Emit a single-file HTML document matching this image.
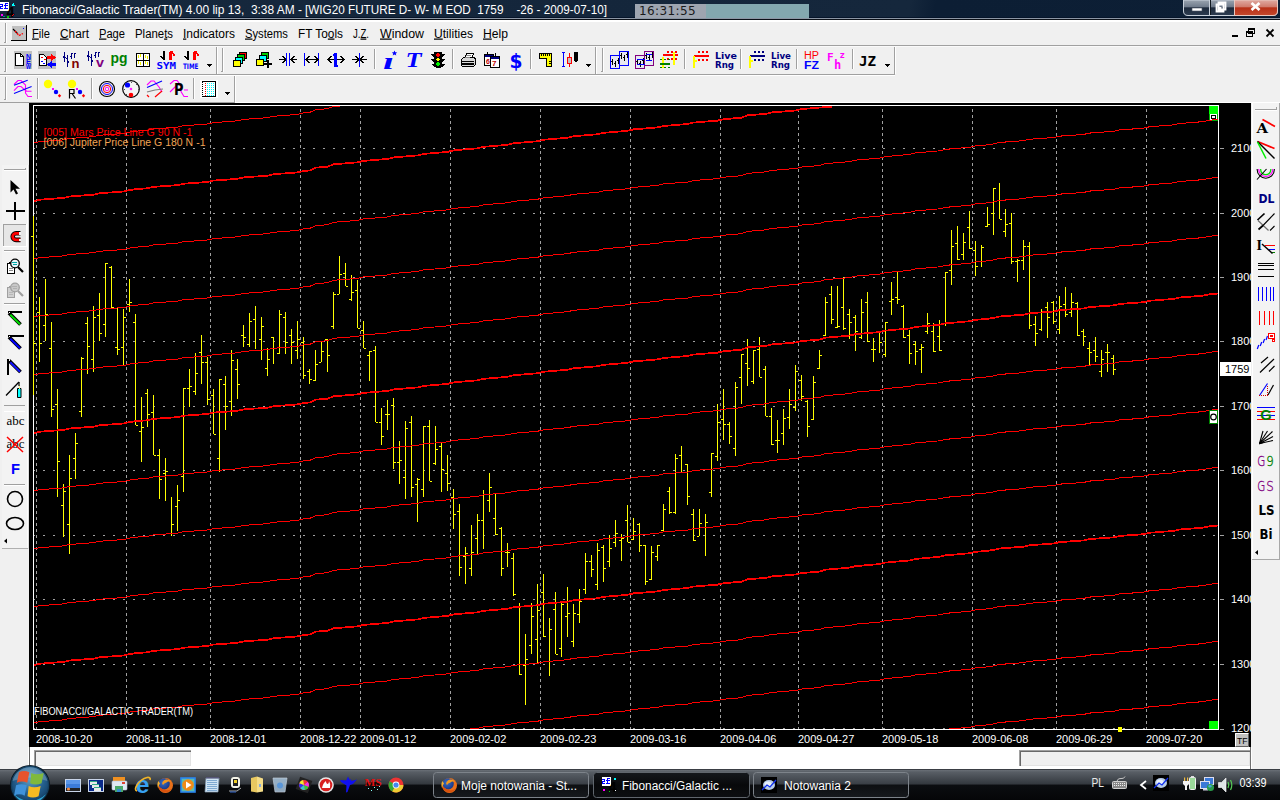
<!DOCTYPE html>
<html><head><meta charset="utf-8"><title>Fibonacci/Galactic Trader</title>
<style>
html,body{margin:0;padding:0}
body{width:1280px;height:800px;overflow:hidden;background:#f0f0f0;position:relative;font-family:"Liberation Sans",Arial,sans-serif;font-size:12px;color:#000}
.abs{position:absolute;display:block}
.t{position:absolute;white-space:nowrap;line-height:1}
</style></head><body>
<div class="abs" style="left:0;top:0;width:1280px;height:17px;background:linear-gradient(100deg,#16283d 0%,#14263b 45%,#15273c 71%,#0c1e34 73%,#0d1f35 100%)"></div>
<div class="abs" style="left:0;top:17px;width:1280px;height:1px;background:#06152a"></div>
<div class="abs" style="left:0;top:18px;width:1280px;height:1px;background:#8c96a4"></div>
<div class="abs" style="left:0;top:19px;width:1280px;height:1px;background:#0c1118"></div>
<div class="abs" style="left:0;top:20px;width:1280px;height:2px;background:#fff"></div>
<div class="abs" style="left:635px;top:4px;width:71px;height:14px;background:#9ea5b0"></div>
<div class="abs" style="left:706px;top:4px;width:103px;height:14px;background:#83a8af"></div>
<div class="t" style="left:639px;top:5px;font-size:12px;color:#1a1a1a;font-family:'DejaVu Sans',sans-serif;letter-spacing:.4px">16:31:55</div>
<div class="abs" style="left:0;top:45px;width:1280px;height:1px;background:#a0a0a0"></div>
<svg class="abs" style="left:0;top:0" width="1280" height="103" viewBox="0 0 1280 103" shape-rendering="crispEdges"><g shape-rendering="auto" xml:space="preserve"><text x="22" y="14" font-size="12.5" fill="#fff" font-weight="normal" font-family="Liberation Sans, sans-serif" textLength="280" lengthAdjust="spacingAndGlyphs">Fibonacci/Galactic Trader(TM) 4.00 lip 13,&#160; 3:38 AM -</text><text x="305" y="14" font-size="12.5" fill="#fff" font-weight="normal" font-family="Liberation Sans, sans-serif" textLength="302" lengthAdjust="spacingAndGlyphs">[WIG20 FUTURE D- W- M EOD&#160; 1759&#160;&#160;&#160; -26 - 2009-07-10]</text><text x="32" y="37.5" font-size="12.3" fill="#000" font-weight="normal" font-family="Liberation Sans, sans-serif" textLength="18" lengthAdjust="spacingAndGlyphs"><tspan text-decoration="underline">F</tspan>ile</text><text x="60" y="37.5" font-size="12.3" fill="#000" font-weight="normal" font-family="Liberation Sans, sans-serif" textLength="29" lengthAdjust="spacingAndGlyphs"><tspan text-decoration="underline">C</tspan>hart</text><text x="99" y="37.5" font-size="12.3" fill="#000" font-weight="normal" font-family="Liberation Sans, sans-serif" textLength="26" lengthAdjust="spacingAndGlyphs"><tspan text-decoration="underline">P</tspan>age</text><text x="135" y="37.5" font-size="12.3" fill="#000" font-weight="normal" font-family="Liberation Sans, sans-serif" textLength="38" lengthAdjust="spacingAndGlyphs">Plane<tspan text-decoration="underline">t</tspan>s</text><text x="183" y="37.5" font-size="12.3" fill="#000" font-weight="normal" font-family="Liberation Sans, sans-serif" textLength="52" lengthAdjust="spacingAndGlyphs"><tspan text-decoration="underline">I</tspan>ndicators</text><text x="245" y="37.5" font-size="12.3" fill="#000" font-weight="normal" font-family="Liberation Sans, sans-serif" textLength="43" lengthAdjust="spacingAndGlyphs"><tspan text-decoration="underline">S</tspan>ystems</text><text x="298" y="37.5" font-size="12.3" fill="#000" font-weight="normal" font-family="Liberation Sans, sans-serif" textLength="45" lengthAdjust="spacingAndGlyphs">FT To<tspan text-decoration="underline">o</tspan>ls</text><text x="353" y="37.5" font-size="12.3" fill="#000" font-weight="normal" font-family="Liberation Sans, sans-serif" textLength="16" lengthAdjust="spacingAndGlyphs">J.<tspan text-decoration="underline">Z</tspan>.</text><text x="380" y="37.5" font-size="12.3" fill="#000" font-weight="normal" font-family="Liberation Sans, sans-serif" textLength="44" lengthAdjust="spacingAndGlyphs"><tspan text-decoration="underline">W</tspan>indow</text><text x="434" y="37.5" font-size="12.3" fill="#000" font-weight="normal" font-family="Liberation Sans, sans-serif" textLength="39" lengthAdjust="spacingAndGlyphs"><tspan text-decoration="underline">U</tspan>tilities</text><text x="483" y="37.5" font-size="12.3" fill="#000" font-weight="normal" font-family="Liberation Sans, sans-serif" textLength="25" lengthAdjust="spacingAndGlyphs"><tspan text-decoration="underline">H</tspan>elp</text></g><rect x="0" y="2" width="9" height="9" fill="#fff"/><rect x="0" y="4" width="3" height="1" fill="#00f"/><rect x="2" y="5" width="1" height="1" fill="#00f"/><rect x="0" y="6" width="3" height="1" fill="#00f"/><rect x="0" y="7" width="1" height="1" fill="#00f"/><rect x="0" y="8" width="3" height="1" fill="#00f"/><rect x="5" y="3" width="1" height="6" fill="#00f"/><rect x="4" y="5" width="4" height="1" fill="#00f"/><rect x="6" y="3" width="2" height="1" fill="#00f"/><rect x="4" y="8" width="4" height="1" fill="#00f"/><text x="6.5" y="17" font-size="14" fill="#000" font-weight="bold" font-family="Liberation Sans, sans-serif" textLength="8" lengthAdjust="spacingAndGlyphs">4</text><path d="M13.500 3l2 3h-4z" fill="#0ff" stroke="none" stroke-width="1" /><rect x="1" y="14" width="2" height="2" fill="#f0f"/><rect x="7" y="16" width="2" height="2" fill="#0c0"/><rect x="3" y="16" width="2" height="1" fill="#088"/><rect x="13" y="14" width="1" height="1" fill="#f00"/><rect x="12" y="15" width="1" height="1" fill="#f00"/><rect x="5" y="23" width="1" height="20" fill="#a0a0a0"/><rect x="4" y="42" width="1" height="1" fill="#a0a0a0"/><rect x="6" y="23" width="1" height="20" fill="#fff"/><rect x="12" y="26" width="14" height="14" fill="#c0c0c0"/><rect x="26" y="25" width="1" height="16" fill="#000"/><rect x="11" y="40" width="16" height="1" fill="#000"/><path d="M13 29l4.500 4.500" fill="none" stroke="#000" stroke-width="1.1" shape-rendering="auto"/><path d="M15 31l4 4.500 4-2" fill="none" stroke="#f00" stroke-width="1.3" stroke-dasharray="2 1" shape-rendering="auto"/><rect x="23" y="28" width="1" height="1" fill="#00f"/><rect x="1232" y="35" width="6" height="2" fill="#000"/><path d="M1248.500 28.500h6v5h-6zM1246.500 31.500h6v5h-6z" fill="#f0f0f0" stroke="#000" stroke-width="1" /><rect x="1248" y="28" width="7" height="2" fill="#000"/><rect x="1246" y="31" width="7" height="2" fill="#000"/><path d="M1266.500 29.500l7 7M1273.500 29.500l-7 7" fill="none" stroke="#000" stroke-width="1.8" shape-rendering="auto"/><defs><linearGradient id="wb" x1="0" y1="0" x2="0" y2="1"><stop offset="0" stop-color="#9aa4b0"/><stop offset=".45" stop-color="#6f7b8b"/><stop offset=".5" stop-color="#1d2a3c"/><stop offset="1" stop-color="#2d3c50"/></linearGradient>
<linearGradient id="wc" x1="0" y1="0" x2="0" y2="1"><stop offset="0" stop-color="#e0aaa2"/><stop offset=".45" stop-color="#cf7a6c"/><stop offset=".5" stop-color="#b83018"/><stop offset="1" stop-color="#c4482c"/></linearGradient></defs><g shape-rendering="auto"><path d="M1183.500 0v11q0 4.500 4.500 4.500h85q4.500 0 4.500-4.500v-11z" fill="url(#wb)" stroke="#c8d0da" stroke-width="1"/><path d="M1234.500 0v15.500h38.500q4.500 0 4.500-4.500v-11z" fill="url(#wc)" stroke="#e8c8c0" stroke-width="1"/><path d="M1209.500 0v15" stroke="#c8d0da"/><path d="M1210.500 0v15" stroke="#101820"/><rect x="1192" y="8" width="10" height="3" fill="#fff" stroke="#4a5564" stroke-width=".6"/><path d="M1218.500 2.500h7v7h-7zM1216.500 4.500h7v7h-7z" fill="none" stroke="#fff" stroke-width="1.800"/><rect x="1219" y="7" width="2.500" height="2.500" fill="#fff"/><path d="M1251.500 3l8 7M1259.500 3l-8 7" stroke="#fff" stroke-width="2.800"/></g><rect x="5" y="48" width="1" height="24" fill="#a0a0a0"/><rect x="4" y="71" width="1" height="1" fill="#a0a0a0"/><rect x="6" y="48" width="1" height="24" fill="#fff"/><rect x="14" y="51" width="18" height="18" fill="#c0c0c0"/><path d="M15.5 53.5h5l3 3v9h-8z" fill="#fff" stroke="#000" stroke-width="1" /><path d="M20.5 53.5v3h3" fill="none" stroke="#000" stroke-width="1" /><text x="26" y="58.5" font-size="6.5" fill="#00f" font-weight="bold" font-family="Liberation Sans, sans-serif" textLength="5" lengthAdjust="spacingAndGlyphs">N</text><text x="26" y="63.7" font-size="6.5" fill="#00f" font-weight="bold" font-family="Liberation Sans, sans-serif" textLength="5" lengthAdjust="spacingAndGlyphs">E</text><text x="26" y="68.9" font-size="6.5" fill="#00f" font-weight="bold" font-family="Liberation Sans, sans-serif" textLength="5" lengthAdjust="spacingAndGlyphs">W</text><rect x="38" y="51" width="18" height="18" fill="#c0c0c0"/><path d="M39.5 54.5h4l3 3v8h-7z" fill="#fff" stroke="#000" stroke-width="1" /><rect x="41" y="57" width="2" height="1" fill="#f00"/><rect x="44" y="59" width="2" height="1" fill="#f00"/><rect x="41" y="61" width="2" height="1" fill="#00f"/><rect x="43" y="63" width="2" height="1" fill="#00f"/><path d="M47 56h4v-2l5 3.5-5 3.5v-2h-4z" fill="#f00" stroke="none" stroke-width="1" /><path d="M56 63h-4v-2l-5 3.5 5 3.5v-2h4z" fill="#00f" stroke="none" stroke-width="1" /><rect x="64" y="52" width="1" height="10" fill="#000080"/><rect x="63" y="56" width="1" height="2" fill="#000080"/><rect x="65" y="57" width="1" height="1" fill="#000080"/><rect x="67" y="55" width="1" height="12" fill="#000080"/><rect x="66" y="58" width="1" height="1" fill="#000080"/><rect x="68" y="61" width="1" height="2" fill="#000080"/><rect x="71" y="53" width="1" height="6" fill="#000080"/><rect x="72" y="53" width="1" height="1" fill="#000080"/><rect x="70" y="56" width="1" height="1" fill="#000080"/><rect x="74" y="53" width="1" height="5" fill="#000080"/><rect x="75" y="53" width="1" height="1" fill="#000080"/><text x="71.5" y="68" font-size="13" fill="#800000" font-weight="bold" font-family="Liberation Sans, sans-serif" textLength="8" lengthAdjust="spacingAndGlyphs">n</text><rect x="88" y="51" width="1" height="10" fill="#000080"/><rect x="87" y="55" width="1" height="2" fill="#000080"/><rect x="89" y="56" width="1" height="1" fill="#000080"/><rect x="91" y="54" width="1" height="12" fill="#000080"/><rect x="90" y="57" width="1" height="1" fill="#000080"/><rect x="92" y="60" width="1" height="2" fill="#000080"/><rect x="95" y="52" width="1" height="6" fill="#000080"/><rect x="96" y="52" width="1" height="1" fill="#000080"/><rect x="94" y="55" width="1" height="1" fill="#000080"/><rect x="98" y="52" width="1" height="5" fill="#000080"/><rect x="99" y="52" width="1" height="1" fill="#000080"/><text x="96" y="67" font-size="13" fill="#800080" font-weight="bold" font-family="Liberation Sans, sans-serif" textLength="8" lengthAdjust="spacingAndGlyphs">v</text><text x="110.5" y="63" font-size="14.5" fill="#008000" font-weight="bold" font-family="Liberation Sans, sans-serif" textLength="17" lengthAdjust="spacingAndGlyphs">pg</text><rect x="136" y="53" width="14" height="14" fill="#fff"/><path d="M136.5 53.5h13v13h-13zM143 54v13M137 60h13" fill="none" stroke="#000" stroke-width="1" /><rect x="138" y="55" width="1" height="3" fill="#ee0"/><rect x="140" y="54" width="1" height="3" fill="#ee0"/><rect x="145" y="55" width="1" height="3" fill="#ee0"/><rect x="147" y="56" width="1" height="3" fill="#ee0"/><rect x="138" y="61" width="1" height="3" fill="#ee0"/><rect x="140" y="62" width="1" height="3" fill="#ee0"/><rect x="145" y="61" width="1" height="3" fill="#ee0"/><rect x="147" y="62" width="1" height="3" fill="#ee0"/><rect x="136" y="66" width="14" height="1" fill="#000"/><rect x="163" y="51" width="2" height="9" fill="#000"/><path d="M163.5 60L159 55.5h2L163.5 58z" fill="#000" stroke="none" stroke-width="1" /><rect x="169" y="52" width="3" height="8" fill="#f00"/><path d="M169 51h3.5l3 4.5h-2.2l-1.6-2.400z" fill="#f00" stroke="none" stroke-width="1" /><text x="156.5" y="69" font-size="9" fill="#00f" font-weight="bold" font-family="DejaVu Sans Mono, sans-serif" textLength="19.5" lengthAdjust="spacingAndGlyphs">SYM</text><rect x="187" y="51" width="2" height="9" fill="#000"/><path d="M187.5 60L183 55.5h2L187.5 58z" fill="#000" stroke="none" stroke-width="1" /><rect x="193" y="52" width="3" height="8" fill="#f00"/><path d="M193 51h3.5l3 4.5h-2.2l-1.6-2.400z" fill="#f00" stroke="none" stroke-width="1" /><text x="183" y="69" font-size="7.5" fill="#00f" font-weight="bold" font-family="DejaVu Sans, sans-serif" textLength="15.5" lengthAdjust="spacingAndGlyphs">TIME</text><path d="M207 64h5l-2.5 3z" fill="#000" stroke="none" stroke-width="1" /><rect x="216" y="46" width="1" height="28" fill="#a0a0a0"/><rect x="217" y="46" width="1" height="28" fill="#fff"/><rect x="222" y="48" width="1" height="24" fill="#a0a0a0"/><rect x="221" y="71" width="1" height="1" fill="#a0a0a0"/><rect x="223" y="48" width="1" height="24" fill="#fff"/><rect x="239.5" y="52.5" width="7" height="6" fill="#f00" stroke="#000"/><rect x="237.5" y="54.5" width="7" height="6" fill="#0c0" stroke="#000"/><rect x="235.5" y="57.5" width="7" height="6" fill="#0ff" stroke="#000"/><rect x="233.5" y="60.5" width="7" height="6" fill="#ff0" stroke="#000"/><rect x="261.5" y="52.5" width="7" height="6" fill="#0c0" stroke="#000"/><rect x="259.5" y="55.5" width="7" height="6" fill="#0ff" stroke="#000"/><rect x="256.5" y="59.5" width="7" height="6" fill="#ff0" stroke="#000"/><rect x="264" y="63" width="8" height="2" fill="#000"/><rect x="267" y="60" width="2" height="8" fill="#000"/><rect x="279" y="59" width="7" height="1" fill="#000"/><path d="M282.5 56L286 59.5L282.5 63" fill="none" stroke="#000" stroke-width="1" /><rect x="291" y="59" width="6" height="1" fill="#000"/><path d="M294.5 56L291 59.5L294.5 63" fill="none" stroke="#000" stroke-width="1" /><rect x="286" y="53" width="1" height="13" fill="#00f"/><rect x="289" y="53" width="1" height="13" fill="#00f"/><rect x="304" y="53" width="1" height="13" fill="#00f"/><rect x="318" y="53" width="1" height="13" fill="#00f"/><rect x="306" y="59" width="12" height="1" fill="#000"/><path d="M309.5 56L306 59.5L309.5 63M314.5 56L318 59.5L314.5 63" fill="none" stroke="#000" stroke-width="1" /><rect x="328" y="59" width="16" height="1" fill="#000"/><path d="M331.5 56L328 59.5L331.5 63M340.5 56L344 59.5L340.5 63" fill="none" stroke="#000" stroke-width="1" /><rect x="334" y="53" width="3" height="14" fill="#00f"/><rect x="333" y="54" width="1" height="2" fill="#00f"/><rect x="337" y="65" width="1" height="2" fill="#00f"/><rect x="352" y="59" width="7" height="1" fill="#000"/><path d="M355.5 56L359 59.5L355.5 63" fill="none" stroke="#000" stroke-width="1" /><rect x="360" y="59" width="7" height="1" fill="#000"/><path d="M363.5 56L360 59.5L363.5 63" fill="none" stroke="#000" stroke-width="1" /><rect x="359" y="53" width="1" height="14" fill="#00f"/><rect x="374" y="49" width="1" height="20" fill="#a0a0a0"/><rect x="375" y="49" width="1" height="20" fill="#fff"/><text x="383" y="69" font-size="23" fill="#00f" font-weight="bold" font-family="Liberation Serif, sans-serif" font-style="italic" textLength="11" lengthAdjust="spacingAndGlyphs">&#305;</text><path d="M394.500 50.500l.800 1.800 1.900.100-1.500 1.300.600 1.900-1.800-1.100-1.800 1.100.600-1.900-1.500-1.300 1.900-.100z" fill="#00f" stroke="none" stroke-width="1" shape-rendering="auto"/><text x="405.5" y="67" font-size="20" fill="#00f" font-weight="bold" font-family="Liberation Serif, sans-serif" font-style="italic" textLength="16" lengthAdjust="spacingAndGlyphs">T</text><path d="M434 52h8v2h3l-2 3h-1v2h3l-2 3h-1v2h3l-3 3h-1l-1 1h-4l-1-1h-1l-3-3h3v-2h-1l-2-3h3v-2h-1l-2-3h3z" fill="#000" stroke="none" stroke-width="1" /><circle cx="438" cy="55" r="1.7" fill="#f00"/><circle cx="438" cy="59.500" r="1.7" fill="#ff0"/><circle cx="438" cy="64" r="1.7" fill="#0e0"/><rect x="452" y="49" width="1" height="20" fill="#a0a0a0"/><rect x="453" y="49" width="1" height="20" fill="#fff"/><path d="M464.5 58.500l2-5h7l-2 5z" fill="#fff" stroke="#000" stroke-width="1" /><path d="M461.5 59.500l2-2h11l1 2v5l-2 2h-11l-1-1z" fill="#d8d8d8" stroke="#000" stroke-width="1" /><rect x="462" y="61" width="12" height="1" fill="#000"/><rect x="462" y="63" width="12" height="2" fill="#000"/><rect x="466" y="55" width="5" height="1" fill="#888"/><rect x="465" y="57" width="5" height="1" fill="#888"/><path d="M484.5 54.500h9v11h-9z" fill="#fff" stroke="#000" stroke-width="1" /><rect x="485" y="55" width="8" height="2" fill="#000080"/><path d="M490.500 56.500h9v11h-9z" fill="#fff" stroke="#000" stroke-width="1" /><rect x="491" y="57" width="8" height="2" fill="#000080"/><text x="492" y="66" font-size="8" fill="#c00000" font-weight="bold" font-family="Liberation Sans, sans-serif" >7</text><text x="486" y="64" font-size="7" fill="#c00000" font-weight="bold" font-family="Liberation Sans, sans-serif" >6</text><rect x="487" y="52" width="1" height="3" fill="#000"/><rect x="495" y="53" width="1" height="3" fill="#000"/><text x="509.5" y="67.5" font-size="19" fill="#00f" font-weight="bold" font-family="DejaVu Sans, sans-serif" textLength="13" lengthAdjust="spacingAndGlyphs">$</text><rect x="530" y="49" width="1" height="20" fill="#a0a0a0"/><rect x="531" y="49" width="1" height="20" fill="#fff"/><path d="M539.500 53.500h12v13h-5v-8h-7z" fill="#ff0" stroke="#000" stroke-width="1" /><rect x="541" y="54" width="1" height="2" fill="#000"/><rect x="543" y="54" width="1" height="2" fill="#000"/><rect x="545" y="54" width="1" height="2" fill="#000"/><rect x="547" y="54" width="1" height="2" fill="#000"/><rect x="549" y="54" width="1" height="2" fill="#000"/><rect x="549" y="61" width="2" height="1" fill="#000"/><rect x="549" y="63" width="2" height="1" fill="#000"/><rect x="563" y="52" width="1" height="15" fill="#00f"/><rect x="562" y="52" width="3" height="1" fill="#00f"/><rect x="562" y="66" width="3" height="1" fill="#00f"/><rect x="569" y="53" width="1" height="14" fill="#f00"/><rect x="567.500" y="57.500" width="4" height="6" fill="#c0c0c0" stroke="#f00"/><path d="M574 52h4v9l-2 1.500l-2-1.500z" fill="#000" stroke="none" stroke-width="1" /><path d="M586 64h5l-2.5 3z" fill="#000" stroke="none" stroke-width="1" /><rect x="595" y="46" width="1" height="28" fill="#a0a0a0"/><rect x="596" y="46" width="1" height="28" fill="#fff"/><rect x="602" y="48" width="1" height="24" fill="#a0a0a0"/><rect x="601" y="71" width="1" height="1" fill="#a0a0a0"/><rect x="603" y="48" width="1" height="24" fill="#fff"/><rect x="619.5" y="51.5" width="9" height="14" fill="#e8e8f0" stroke="#00f"/><rect x="610.5" y="55.5" width="9" height="13" fill="#e8e8f0" stroke="#00f"/><rect x="612" y="59" width="1" height="6" fill="#000"/><rect x="611" y="61" width="1" height="1" fill="#000"/><rect x="615" y="61" width="1" height="6" fill="#000"/><rect x="614" y="63" width="1" height="1" fill="#000"/><rect x="618" y="58" width="1" height="6" fill="#000"/><rect x="617" y="60" width="1" height="1" fill="#000"/><rect x="621" y="53" width="1" height="6" fill="#000"/><rect x="620" y="55" width="1" height="1" fill="#000"/><rect x="624" y="55" width="1" height="6" fill="#000"/><rect x="623" y="57" width="1" height="1" fill="#000"/><rect x="627" y="52" width="1" height="6" fill="#000"/><rect x="626" y="54" width="1" height="1" fill="#000"/><rect x="644.5" y="51.5" width="9" height="14" fill="#e8e8f0" stroke="#800080"/><rect x="635.5" y="55.5" width="9" height="13" fill="#e8e8f0" stroke="#800080"/><rect x="637" y="59" width="1" height="6" fill="#000"/><rect x="636" y="61" width="1" height="1" fill="#000"/><rect x="640" y="61" width="1" height="6" fill="#000"/><rect x="639" y="63" width="1" height="1" fill="#000"/><rect x="643" y="58" width="1" height="6" fill="#000"/><rect x="642" y="60" width="1" height="1" fill="#000"/><rect x="646" y="53" width="1" height="6" fill="#000"/><rect x="645" y="55" width="1" height="1" fill="#000"/><rect x="649" y="55" width="1" height="6" fill="#000"/><rect x="648" y="57" width="1" height="1" fill="#000"/><rect x="652" y="52" width="1" height="6" fill="#000"/><rect x="651" y="54" width="1" height="1" fill="#000"/><rect x="637" y="59" width="8" height="1" fill="#00f"/><rect x="637" y="64" width="8" height="1" fill="#00f"/><rect x="646" y="54" width="6" height="1" fill="#00f"/><rect x="646" y="60" width="6" height="1" fill="#00f"/><rect x="667" y="51" width="2" height="2" fill="#f00"/><rect x="667" y="58" width="2" height="2" fill="#f00"/><rect x="671" y="51" width="2" height="2" fill="#f00"/><rect x="671" y="58" width="2" height="2" fill="#f00"/><rect x="675" y="51" width="2" height="2" fill="#f00"/><rect x="675" y="58" width="2" height="2" fill="#f00"/><rect x="663" y="54" width="15" height="2" fill="#f00"/><rect x="673" y="52" width="2" height="13" fill="#ff0"/><rect x="662" y="57" width="2" height="11" fill="#ff0"/><rect x="660" y="63" width="10" height="2" fill="#008000"/><rect x="660" y="59" width="2" height="1" fill="#008000"/><rect x="660" y="67" width="2" height="1" fill="#008000"/><rect x="664" y="59" width="2" height="1" fill="#008000"/><rect x="664" y="67" width="2" height="1" fill="#008000"/><rect x="668" y="59" width="2" height="1" fill="#008000"/><rect x="668" y="67" width="2" height="1" fill="#008000"/><rect x="684" y="49" width="1" height="20" fill="#a0a0a0"/><rect x="685" y="49" width="1" height="20" fill="#fff"/><rect x="698" y="51" width="2" height="2" fill="#f00"/><rect x="698" y="59" width="2" height="2" fill="#f00"/><rect x="702" y="51" width="2" height="2" fill="#f00"/><rect x="702" y="59" width="2" height="2" fill="#f00"/><rect x="706" y="51" width="2" height="2" fill="#f00"/><rect x="706" y="59" width="2" height="2" fill="#f00"/><rect x="694" y="55" width="15" height="2" fill="#f00"/><rect x="693" y="56" width="2" height="12" fill="#ff0"/><rect x="695" y="60" width="2" height="2" fill="#ff0"/><text x="715" y="58.5" font-size="8.5" fill="#000080" font-weight="bold" font-family="DejaVu Sans, sans-serif" textLength="22" lengthAdjust="spacingAndGlyphs">Live</text><text x="715" y="67.5" font-size="8.5" fill="#000080" font-weight="bold" font-family="DejaVu Sans, sans-serif" textLength="19" lengthAdjust="spacingAndGlyphs">Rng</text><rect x="740" y="49" width="1" height="20" fill="#a0a0a0"/><rect x="741" y="49" width="1" height="20" fill="#fff"/><rect x="754" y="51" width="2" height="2" fill="#000080"/><rect x="754" y="59" width="2" height="2" fill="#000080"/><rect x="758" y="51" width="2" height="2" fill="#000080"/><rect x="758" y="59" width="2" height="2" fill="#000080"/><rect x="762" y="51" width="2" height="2" fill="#000080"/><rect x="762" y="59" width="2" height="2" fill="#000080"/><rect x="750" y="55" width="15" height="2" fill="#000080"/><rect x="749" y="56" width="2" height="12" fill="#ff0"/><rect x="751" y="60" width="2" height="2" fill="#ff0"/><text x="771" y="58.5" font-size="8.5" fill="#000080" font-weight="bold" font-family="DejaVu Sans, sans-serif" textLength="20" lengthAdjust="spacingAndGlyphs">Live</text><text x="771" y="67.5" font-size="8.5" fill="#000080" font-weight="bold" font-family="DejaVu Sans, sans-serif" textLength="19" lengthAdjust="spacingAndGlyphs">Rng</text><rect x="796" y="49" width="1" height="20" fill="#a0a0a0"/><rect x="797" y="49" width="1" height="20" fill="#fff"/><text x="804" y="58.5" font-size="10" fill="#f00" font-weight="normal" font-family="Liberation Sans, sans-serif" textLength="15" lengthAdjust="spacingAndGlyphs">HP</text><text x="804" y="68.5" font-size="11.5" fill="#00f" font-weight="bold" font-family="Liberation Sans, sans-serif" textLength="15" lengthAdjust="spacingAndGlyphs">FZ</text><text x="827" y="61" font-size="11" fill="#f0f" font-weight="bold" font-family="DejaVu Sans Mono, sans-serif" >F</text><text x="834" y="68.5" font-size="12" fill="#f0f" font-weight="bold" font-family="DejaVu Sans Mono, sans-serif" >h</text><text x="839.5" y="58" font-size="9" fill="#f0f" font-weight="bold" font-family="DejaVu Sans Mono, sans-serif" >z</text><rect x="852" y="49" width="1" height="20" fill="#a0a0a0"/><rect x="853" y="49" width="1" height="20" fill="#fff"/><text x="859" y="66" font-size="14" fill="#000" font-weight="bold" font-family="DejaVu Sans Mono, sans-serif" textLength="17" lengthAdjust="spacingAndGlyphs">JZ</text><path d="M885 64h5l-2.5 3z" fill="#000" stroke="none" stroke-width="1" /><rect x="894" y="46" width="1" height="28" fill="#a0a0a0"/><rect x="895" y="46" width="1" height="28" fill="#fff"/><rect x="5" y="77" width="1" height="23" fill="#a0a0a0"/><rect x="4" y="99" width="1" height="1" fill="#a0a0a0"/><rect x="6" y="77" width="1" height="23" fill="#fff"/><path d="M14 84.5L18 80.5h3L25.5 85v8l2.5 3.500h4M14 90.700L18 86.500h3l4.500 4 1.500.700h4.500" fill="none" stroke="#f0f" stroke-width="1.1" shape-rendering="auto"/><path d="M14 85.300L27.700 80.300M14 93.500L31.600 86.500" fill="none" stroke="#00f" stroke-width="1.1" shape-rendering="auto"/><rect x="37" y="78" width="1" height="21" fill="#a0a0a0"/><rect x="38" y="78" width="1" height="21" fill="#fff"/><circle cx="48" cy="84" r="4.200" fill="#ff0" shape-rendering="auto"/><rect x="52" y="88" width="2" height="2" fill="#f0f"/><circle cx="56" cy="92" r="2.200" fill="#00f" shape-rendering="auto"/><path d="M59.5 94l1.700 1.700-1.700 1.700-1.700-1.700z" fill="#f00" stroke="none" stroke-width="1" shape-rendering="auto"/><circle cx="72" cy="84" r="4.200" fill="#ff0" shape-rendering="auto"/><rect x="76" y="88" width="2" height="2" fill="#f0f"/><circle cx="80" cy="92" r="2.200" fill="#00f" shape-rendering="auto"/><path d="M83.5 94l1.700 1.700-1.700 1.700-1.700-1.700z" fill="#f00" stroke="none" stroke-width="1" shape-rendering="auto"/><path d="M69.500 98.500v-9h4.500v4h-4.500M72 93.500l3.500 5" fill="none" stroke="#000" stroke-width="1.2" shape-rendering="auto"/><rect x="91" y="78" width="1" height="21" fill="#a0a0a0"/><rect x="92" y="78" width="1" height="21" fill="#fff"/><g fill="none" shape-rendering="auto"><circle cx="107" cy="89" r="7.500" stroke="#000" stroke-width="1.200"/><circle cx="107" cy="89" r="5.500" stroke="#00f"/><circle cx="107" cy="89" r="3.700" stroke="#f00"/><circle cx="107" cy="89" r="1.800" stroke="#f0f"/></g><g shape-rendering="auto"><circle cx="131" cy="89" r="8.300" fill="#f4f4f4" stroke="#000" stroke-width="1.200"/><circle cx="127.500" cy="85" r="2.600" fill="#00f"/><circle cx="131" cy="95" r="2.300" fill="#f00"/><path d="M131 87.500l1.500 1.500-1.500 1.500-1.500-1.500z" fill="#f0f"/></g><rect x="131" y="81.5" width="1" height="1" fill="#555"/><rect x="138" y="88.5" width="1" height="1" fill="#555"/><rect x="123.5" y="88.5" width="1" height="1" fill="#555"/><rect x="136" y="83.5" width="1" height="1" fill="#555"/><rect x="136" y="94" width="1" height="1" fill="#555"/><rect x="125.5" y="94" width="1" height="1" fill="#555"/><path d="M147 85l4-4h3l5 6 3 5" fill="none" stroke="#f0f" stroke-width="1.1" shape-rendering="auto"/><path d="M147 87.500l15-6.500" fill="none" stroke="#00f" stroke-width="1.2" shape-rendering="auto"/><path d="M147 92l8-2 8-1" fill="none" stroke="#808080" stroke-width="1.2" shape-rendering="auto"/><path d="M147 95l2 2M155 97l7-6" fill="none" stroke="#f00" stroke-width="1.2" shape-rendering="auto"/><path d="M170 84l4-3.500h3l4 5v6l3 5h4M170 92l7-7M184 90h4" fill="none" stroke="#f0f" stroke-width="1.1" shape-rendering="auto"/><text x="174" y="95" font-size="15" fill="#000" font-weight="bold" font-family="DejaVu Sans, sans-serif" textLength="9.500" lengthAdjust="spacingAndGlyphs">P</text><rect x="193" y="78" width="1" height="21" fill="#a0a0a0"/><rect x="194" y="78" width="1" height="21" fill="#fff"/><rect x="200" y="80" width="18" height="18" fill="#fff"/><path d="M202.500 81.500h13v15h-13z" fill="#fff" stroke="#000" stroke-width="1" /><rect x="202" y="83" width="1" height="1" fill="#fff"/><rect x="205" y="83" width="1" height="1" fill="#f00"/><rect x="207" y="83" width="1" height="1" fill="#0ff"/><rect x="209" y="83" width="1" height="1" fill="#0ff"/><rect x="211" y="83" width="1" height="1" fill="#0ff"/><rect x="213" y="83" width="1" height="1" fill="#0ff"/><rect x="202" y="85" width="1" height="1" fill="#fff"/><rect x="205" y="85" width="1" height="1" fill="#f00"/><rect x="207" y="85" width="1" height="1" fill="#0ff"/><rect x="209" y="85" width="1" height="1" fill="#0ff"/><rect x="211" y="85" width="1" height="1" fill="#0ff"/><rect x="213" y="85" width="1" height="1" fill="#0ff"/><rect x="202" y="87" width="1" height="1" fill="#fff"/><rect x="205" y="87" width="1" height="1" fill="#f00"/><rect x="207" y="87" width="1" height="1" fill="#0ff"/><rect x="209" y="87" width="1" height="1" fill="#0ff"/><rect x="211" y="87" width="1" height="1" fill="#0ff"/><rect x="213" y="87" width="1" height="1" fill="#0ff"/><rect x="202" y="89" width="1" height="1" fill="#fff"/><rect x="205" y="89" width="1" height="1" fill="#f00"/><rect x="207" y="89" width="1" height="1" fill="#0ff"/><rect x="209" y="89" width="1" height="1" fill="#0ff"/><rect x="211" y="89" width="1" height="1" fill="#0ff"/><rect x="213" y="89" width="1" height="1" fill="#0ff"/><rect x="202" y="91" width="1" height="1" fill="#fff"/><rect x="205" y="91" width="1" height="1" fill="#f00"/><rect x="207" y="91" width="1" height="1" fill="#0ff"/><rect x="209" y="91" width="1" height="1" fill="#0ff"/><rect x="211" y="91" width="1" height="1" fill="#0ff"/><rect x="213" y="91" width="1" height="1" fill="#0ff"/><rect x="202" y="93" width="1" height="1" fill="#fff"/><rect x="205" y="93" width="1" height="1" fill="#f00"/><rect x="207" y="93" width="1" height="1" fill="#0ff"/><rect x="209" y="93" width="1" height="1" fill="#0ff"/><rect x="211" y="93" width="1" height="1" fill="#0ff"/><rect x="213" y="93" width="1" height="1" fill="#0ff"/><rect x="202" y="95" width="1" height="1" fill="#fff"/><rect x="205" y="95" width="1" height="1" fill="#f00"/><rect x="207" y="95" width="1" height="1" fill="#0ff"/><rect x="209" y="95" width="1" height="1" fill="#0ff"/><rect x="211" y="95" width="1" height="1" fill="#0ff"/><rect x="213" y="95" width="1" height="1" fill="#0ff"/><path d="M225 92h5l-2.5 3z" fill="#000" stroke="none" stroke-width="1" /><rect x="234" y="75" width="1" height="27" fill="#a0a0a0"/><rect x="235" y="75" width="1" height="27" fill="#fff"/></svg>
<div class="abs" style="left:0;top:74px;width:895px;height:1px;background:#a0a0a0"></div>
<div class="abs" style="left:0;top:75px;width:895px;height:1px;background:#fff"></div>
<div class="abs" style="left:0;top:46px;width:1280px;height:1px;background:#fafafa"></div>
<div class="abs" style="left:0;top:102px;width:235px;height:1px;background:#a0a0a0"></div>
<div class="abs" style="left:235px;top:102px;width:1045px;height:1px;background:#fff"></div>
<svg class="abs" style="left:0;top:103px" width="1280" height="667" viewBox="0 103 1280 667" shape-rendering="crispEdges"><rect x="2" y="165" width="26" height="384" fill="#f3f3f3"/><rect x="27" y="165" width="1" height="384" fill="#fcfcfc"/><rect x="28" y="165" width="1" height="384" fill="#dcdcdc"/><rect x="2" y="548" width="26" height="1" fill="#b0b0b0"/><rect x="4" y="169" width="22" height="1" fill="#a0a0a0"/><rect x="4" y="170" width="22" height="1" fill="#fff"/><rect x="25" y="168" width="1" height="2" fill="#a0a0a0"/><path d="M10.500 180v12.500l3-3 2.500 5 2-1-2.500-4.800h4.500z" fill="#000" stroke="none" stroke-width="1" shape-rendering="auto"/><rect x="6" y="210" width="19" height="2" fill="#000"/><rect x="14" y="202" width="2" height="18" fill="#000"/><rect x="3" y="224" width="24" height="23" fill="#e6e6e6"/><rect x="3" y="224" width="24" height="1" fill="#a0a0a0"/><rect x="3" y="224" width="1" height="23" fill="#a0a0a0"/><rect x="3" y="246" width="24" height="1" fill="#fff"/><rect x="26" y="224" width="1" height="23" fill="#fff"/><path d="M20.500 233.300h-4.500a3.300 3.300 0 0 0 0 6.600h4.500" fill="none" stroke="#000" stroke-width="4.6" shape-rendering="auto"/><path d="M20.500 233.300h-4.500a3.300 3.300 0 0 0 0 6.600h4.500" fill="none" stroke="#f00" stroke-width="2.8" shape-rendering="auto"/><rect x="18.5" y="232" width="2" height="2.7" fill="#f4f4f4"/><rect x="18.5" y="238.5" width="2" height="2.7" fill="#f4f4f4"/><rect x="4" y="250" width="21" height="1" fill="#a0a0a0"/><rect x="4" y="251" width="21" height="1" fill="#fff"/><path d="M7.500 263.5h7v10h-7z" fill="#fff" stroke="#000" stroke-width="1" /><rect x="9" y="262" width="3" height="2" fill="#000"/><circle cx="15" cy="263.5" r="4.3" fill="#e8f4f8" stroke="#000" stroke-width="1.3" shape-rendering="auto"/><path d="M18 267l5 5" fill="none" stroke="#000" stroke-width="2.2" shape-rendering="auto"/><rect x="12" y="262" width="5" height="1" fill="#0aa"/><rect x="13" y="264" width="4" height="1" fill="#0aa"/><rect x="9" y="268" width="4" height="1" fill="#888"/><rect x="9" y="270" width="4" height="1" fill="#888"/><path d="M7.500 287.5h7v10h-7z" fill="#d0d0d0" stroke="#a0a0a0" stroke-width="1" /><rect x="9" y="286" width="3" height="2" fill="#a0a0a0"/><circle cx="15" cy="287.5" r="4.3" fill="#c8c8c8" stroke="#a0a0a0" stroke-width="1.3" shape-rendering="auto"/><path d="M18 291l5 5" fill="none" stroke="#a0a0a0" stroke-width="2.2" shape-rendering="auto"/><rect x="12" y="286" width="5" height="1" fill="#b0b0b0"/><rect x="13" y="288" width="4" height="1" fill="#b0b0b0"/><rect x="9" y="292" width="4" height="1" fill="#b8b8b8"/><rect x="9" y="294" width="4" height="1" fill="#b8b8b8"/><rect x="4" y="303" width="21" height="1" fill="#a0a0a0"/><rect x="4" y="304" width="21" height="1" fill="#fff"/><rect x="8" y="311" width="14" height="2" fill="#000"/><path d="M9 313L20.500 324.5" fill="none" stroke="#000" stroke-width="3.8" shape-rendering="auto"/><path d="M10.300 314.7L20 324.3" fill="none" stroke="#0d0" stroke-width="1.9" shape-rendering="auto"/><rect x="9" y="312" width="1" height="1" fill="#fff"/><rect x="8" y="335" width="16" height="2" fill="#000"/><path d="M9 337L20.500 348.5" fill="none" stroke="#000" stroke-width="3.8" shape-rendering="auto"/><path d="M10.300 338.7L20 348.3" fill="none" stroke="#00f" stroke-width="1.9" shape-rendering="auto"/><rect x="9" y="336" width="1" height="1" fill="#fff"/><rect x="7" y="359" width="2" height="16" fill="#000"/><path d="M9 360.5L20.500 372.0" fill="none" stroke="#000" stroke-width="3.8" shape-rendering="auto"/><path d="M10.300 362.2L20 371.8" fill="none" stroke="#11f" stroke-width="1.9" shape-rendering="auto"/><rect x="9" y="359.5" width="1" height="1" fill="#fff"/><path d="M6 395.500L19 382" fill="none" stroke="#000" stroke-width="1.3" shape-rendering="auto"/><path d="M17.500 388.500h3.500v9h-3.500z" fill="#0ff" stroke="#000" stroke-width="1" shape-rendering="auto"/><rect x="19" y="385" width="1" height="4" fill="#ee8"/><path d="M19 382v4" fill="none" stroke="#000" stroke-width="1.2" shape-rendering="auto"/><rect x="4" y="405" width="21" height="1" fill="#a0a0a0"/><rect x="4" y="411" width="21" height="1" fill="#fff"/><text x="6.5" y="425" font-size="13" fill="#000" font-weight="normal" font-family="Liberation Serif, sans-serif" textLength="18" lengthAdjust="spacingAndGlyphs">abc</text><text x="6.5" y="448" font-size="13" fill="#000" font-weight="normal" font-family="Liberation Serif, sans-serif" textLength="18" lengthAdjust="spacingAndGlyphs">abc</text><path d="M7 437L23 452M23 437L7 452" fill="none" stroke="#f00" stroke-width="1.5" shape-rendering="auto"/><text x="11" y="474" font-size="14" fill="#00f" font-weight="bold" font-family="Liberation Sans, sans-serif" textLength="9" lengthAdjust="spacingAndGlyphs">F</text><rect x="4" y="484" width="21" height="1" fill="#a0a0a0"/><rect x="4" y="485" width="21" height="1" fill="#fff"/><circle cx="15" cy="499" r="7.5" fill="none" stroke="#000" stroke-width="1.6" shape-rendering="auto"/><ellipse cx="15" cy="523.500" rx="8.500" ry="6" fill="none" stroke="#000" stroke-width="1.600" shape-rendering="auto"/><path d="M7 538.500v5l-3-2.500z" fill="#000" stroke="none" stroke-width="1" shape-rendering="auto"/><rect x="1252" y="103" width="28" height="457" fill="#f3f3f3"/><rect x="1252" y="103" width="1" height="457" fill="#fff"/><rect x="1279" y="103" width="1" height="457" fill="#a8a8a8"/><rect x="1252" y="559" width="28" height="1" fill="#a8a8a8"/><rect x="1255" y="109" width="22" height="1" fill="#a0a0a0"/><rect x="1255" y="110" width="22" height="1" fill="#fff"/><rect x="1276" y="107" width="1" height="3" fill="#a0a0a0"/><text x="1256.5" y="132.5" font-size="13.7" fill="#000" font-weight="bold" font-family="DejaVu Serif, sans-serif" textLength="11.500" lengthAdjust="spacingAndGlyphs">A</text><path d="M1262.500 119.500L1275 126.500" fill="none" stroke="#f00" stroke-width="1.7" shape-rendering="auto"/><path d="M1257.500 141.500L1274.500 148.500" fill="none" stroke="#f00" stroke-width="1.8" shape-rendering="auto"/><path d="M1257.500 141.500L1274.500 158.500" fill="none" stroke="#000" stroke-width="1.4" shape-rendering="auto"/><path d="M1257.500 142L1266 158.500" fill="none" stroke="#0e0" stroke-width="1.5" shape-rendering="auto"/><clipPath id="ca"><rect x="1256" y="169" width="20" height="12"/></clipPath><g clip-path="url(#ca)"><circle cx="1265.75" cy="169.6" r="8.6" fill="none" stroke="#000" stroke-width="1.1" shape-rendering="auto"/><circle cx="1265.75" cy="169.4" r="7" fill="none" stroke="#f0f" stroke-width="1.3" shape-rendering="auto"/><circle cx="1265.75" cy="169.6" r="5.1" fill="none" stroke="#0d0" stroke-width="1.3" shape-rendering="auto"/></g><path d="M1257 179.500L1266.500 169" fill="none" stroke="#000" stroke-width="1.1" shape-rendering="auto"/><text x="1258.5" y="203" font-size="13" fill="#000080" font-weight="bold" font-family="DejaVu Sans, sans-serif" textLength="16" lengthAdjust="spacingAndGlyphs">DL</text><path d="M1258 220.500L1268.500 230.500" fill="none" stroke="#707070" stroke-width="1.2" shape-rendering="auto"/><path d="M1257.500 220L1264.500 213.500M1258.500 229.500L1263 225.500" fill="none" stroke="#000" stroke-width="1.7" shape-rendering="auto"/><path d="M1263 225.500L1274.500 213.500M1270 230.500L1274.500 226" fill="none" stroke="#000" stroke-width="1.1" shape-rendering="auto"/><text x="1256.5" y="250" font-size="15.5" fill="#000" font-weight="bold" font-family="Liberation Serif, sans-serif" textLength="5.500" lengthAdjust="spacingAndGlyphs">I</text><rect x="1265" y="245" width="10" height="1" fill="#f00"/><rect x="1269" y="249" width="6" height="1" fill="#00f"/><rect x="1272" y="252" width="3" height="1" fill="#008000"/><path d="M1262 244L1272.500 253.500" fill="none" stroke="#000" stroke-width="1.4" shape-rendering="auto"/><rect x="1258" y="263" width="16" height="1" fill="#000"/><rect x="1258" y="265" width="16" height="1" fill="#000"/><rect x="1258" y="269" width="16" height="1" fill="#000"/><rect x="1258" y="276" width="16" height="1" fill="#000"/><rect x="1258" y="287" width="1" height="14" fill="#00f"/><rect x="1262" y="287" width="1" height="14" fill="#00f"/><rect x="1266" y="287" width="1" height="14" fill="#00f"/><rect x="1270" y="287" width="1" height="14" fill="#00f"/><rect x="1273" y="287" width="1" height="14" fill="#00f"/><rect x="1259" y="311" width="1" height="14" fill="#f00"/><rect x="1264" y="311" width="1" height="14" fill="#f00"/><rect x="1269" y="311" width="1" height="14" fill="#f00"/><rect x="1273" y="311" width="1" height="14" fill="#f00"/><path d="M1257.3 349l1.500-4" fill="none" stroke="#00f" stroke-width="1.2" shape-rendering="auto"/><path d="M1260.2 346l1.500-4" fill="none" stroke="#00f" stroke-width="1.2" shape-rendering="auto"/><path d="M1263.1 343l1.500-4" fill="none" stroke="#00f" stroke-width="1.2" shape-rendering="auto"/><path d="M1266.0 340l1.500-4" fill="none" stroke="#00f" stroke-width="1.2" shape-rendering="auto"/><path d="M1268.500 333.500h6v5h-6z" fill="#fff" stroke="#f00" stroke-width="1" /><rect x="1270" y="335" width="3" height="2" fill="#f00"/><rect x="1272" y="339" width="3" height="3" fill="#f00"/><rect x="1273" y="340" width="1" height="1" fill="#fff"/><path d="M1260 372.500L1274 359M1261 363L1268 357M1269 371.500L1274.500 366" fill="none" stroke="#000" stroke-width="1.2" shape-rendering="auto"/><path d="M1259.500 395.500L1267.500 383.500" fill="none" stroke="#00f" stroke-width="1.2" shape-rendering="auto"/><path d="M1259 395.500h9" fill="none" stroke="#c00" stroke-width="1.2" stroke-dasharray="1 1"/><path d="M1268 395L1273.500 385" fill="none" stroke="#000" stroke-width="1.2" shape-rendering="auto"/><path d="M1267.500 386v9" fill="none" stroke="#c00" stroke-width="1" stroke-dasharray="1 1"/><rect x="1257" y="407" width="18" height="1" fill="#00f"/><rect x="1257" y="411" width="18" height="1" fill="#f00"/><rect x="1257" y="415" width="18" height="1" fill="#00f"/><rect x="1257" y="419" width="18" height="1" fill="#f00"/><text x="1260.3" y="420.3" font-size="15.5" fill="#008000" font-weight="bold" font-family="Liberation Sans, sans-serif" textLength="11.500" lengthAdjust="spacingAndGlyphs">G</text><path d="M1259.500 443.500l3.5 -12.5" fill="none" stroke="#000" stroke-width="1.1" shape-rendering="auto"/><path d="M1259.500 443.500l8 -12.5" fill="none" stroke="#000" stroke-width="1.1" shape-rendering="auto"/><path d="M1259.500 443.500l13 -12" fill="none" stroke="#000" stroke-width="1.1" shape-rendering="auto"/><path d="M1259.500 443.500l13.5 -7" fill="none" stroke="#000" stroke-width="1.1" shape-rendering="auto"/><path d="M1259.500 443.500l13.5 -3" fill="none" stroke="#000" stroke-width="1.1" shape-rendering="auto"/><path d="M1259 444.500l2-4.500 2.500 3z" fill="#000" stroke="none" stroke-width="1" shape-rendering="auto"/><text x="1257.3" y="466.3" font-size="13.5" fill="#800080" font-weight="200" font-family="DejaVu Sans Light, sans-serif" textLength="8" lengthAdjust="spacingAndGlyphs" stroke="#800080" stroke-width=".350">G</text><text x="1266.3" y="466.3" font-size="13.5" fill="#008000" font-weight="200" font-family="DejaVu Sans Light, sans-serif" textLength="7.500" lengthAdjust="spacingAndGlyphs" stroke="#008000" stroke-width=".350">9</text><text x="1257.3" y="491.3" font-size="13.5" fill="#800080" font-weight="200" font-family="DejaVu Sans Light, sans-serif" textLength="8" lengthAdjust="spacingAndGlyphs" stroke="#800080" stroke-width=".350">G</text><text x="1266.3" y="491.3" font-size="13.5" fill="#800080" font-weight="200" font-family="DejaVu Sans Light, sans-serif" textLength="7.500" lengthAdjust="spacingAndGlyphs" stroke="#800080" stroke-width=".350">S</text><text x="1258.5" y="515" font-size="13.5" fill="#000" font-weight="bold" font-family="DejaVu Sans, sans-serif" textLength="16" lengthAdjust="spacingAndGlyphs">LS</text><text x="1259.5" y="539" font-size="13.5" fill="#000" font-weight="bold" font-family="DejaVu Sans, sans-serif" textLength="13" lengthAdjust="spacingAndGlyphs">Bi</text><path d="M1258 550v5l-3-2.500z" fill="#000" stroke="none" stroke-width="1" shape-rendering="auto"/><rect x="28" y="747" width="1" height="22" fill="#fff"/><rect x="29" y="747" width="1222" height="22" fill="#fff"/><rect x="29" y="747" width="1" height="22" fill="#606060"/><rect x="1250" y="747" width="1" height="22" fill="#707070"/><rect x="1251" y="747" width="1" height="22" fill="#fff"/><rect x="34" y="750" width="157" height="16" fill="#f0f0f0"/><rect x="34" y="750" width="157" height="1" fill="#a0a0a0"/><rect x="34" y="750" width="1" height="16" fill="#a0a0a0"/><rect x="35" y="751" width="156" height="1" fill="#696969"/><rect x="35" y="751" width="1" height="15" fill="#696969"/><rect x="36" y="765" width="155" height="1" fill="#e3e3e3"/><rect x="190" y="752" width="1" height="14" fill="#e3e3e3"/><rect x="1019" y="750" width="231" height="16" fill="#f0f0f0"/><rect x="1019" y="750" width="231" height="1" fill="#a0a0a0"/><rect x="1019" y="750" width="1" height="16" fill="#a0a0a0"/><rect x="1020" y="751" width="230" height="1" fill="#696969"/><rect x="1020" y="751" width="1" height="15" fill="#696969"/><rect x="1021" y="765" width="229" height="1" fill="#e3e3e3"/><rect x="1249" y="752" width="1" height="14" fill="#e3e3e3"/><rect x="0" y="769" width="1280" height="1" fill="#3a3e44"/></svg>
<svg class="abs" style="left:29px;top:103px" width="1222" height="644" viewBox="29 103 1222 644" shape-rendering="crispEdges">
<rect x="29" y="103" width="1222" height="644" fill="#000"/>
<line x1="36.5" y1="107" x2="36.5" y2="733" stroke="#a0a0a0" stroke-width="1" stroke-dasharray="3 3" stroke-dashoffset="4"/>
<line x1="126.5" y1="107" x2="126.5" y2="733" stroke="#a0a0a0" stroke-width="1" stroke-dasharray="3 3" stroke-dashoffset="4"/>
<line x1="210.5" y1="107" x2="210.5" y2="733" stroke="#a0a0a0" stroke-width="1" stroke-dasharray="3 3" stroke-dashoffset="4"/>
<line x1="300.5" y1="107" x2="300.5" y2="733" stroke="#a0a0a0" stroke-width="1" stroke-dasharray="3 3" stroke-dashoffset="4"/>
<line x1="360.5" y1="107" x2="360.5" y2="733" stroke="#a0a0a0" stroke-width="1" stroke-dasharray="3 3" stroke-dashoffset="4"/>
<line x1="450.5" y1="107" x2="450.5" y2="733" stroke="#a0a0a0" stroke-width="1" stroke-dasharray="3 3" stroke-dashoffset="4"/>
<line x1="540.5" y1="107" x2="540.5" y2="733" stroke="#a0a0a0" stroke-width="1" stroke-dasharray="3 3" stroke-dashoffset="4"/>
<line x1="630.5" y1="107" x2="630.5" y2="733" stroke="#a0a0a0" stroke-width="1" stroke-dasharray="3 3" stroke-dashoffset="4"/>
<line x1="720.5" y1="107" x2="720.5" y2="733" stroke="#a0a0a0" stroke-width="1" stroke-dasharray="3 3" stroke-dashoffset="4"/>
<line x1="798.5" y1="107" x2="798.5" y2="733" stroke="#a0a0a0" stroke-width="1" stroke-dasharray="3 3" stroke-dashoffset="4"/>
<line x1="882.5" y1="107" x2="882.5" y2="733" stroke="#a0a0a0" stroke-width="1" stroke-dasharray="3 3" stroke-dashoffset="4"/>
<line x1="972.5" y1="107" x2="972.5" y2="733" stroke="#a0a0a0" stroke-width="1" stroke-dasharray="3 3" stroke-dashoffset="4"/>
<line x1="1056.5" y1="107" x2="1056.5" y2="733" stroke="#a0a0a0" stroke-width="1" stroke-dasharray="3 3" stroke-dashoffset="4"/>
<line x1="1146.5" y1="107" x2="1146.5" y2="733" stroke="#a0a0a0" stroke-width="1" stroke-dasharray="3 3" stroke-dashoffset="4"/>
<line x1="34" y1="148.5" x2="1218" y2="148.5" stroke="#a0a0a0" stroke-width="1" stroke-dasharray="2 8" stroke-dashoffset="1"/>
<line x1="34" y1="213.5" x2="1218" y2="213.5" stroke="#a0a0a0" stroke-width="1" stroke-dasharray="2 8" stroke-dashoffset="1"/>
<line x1="34" y1="277.5" x2="1218" y2="277.5" stroke="#a0a0a0" stroke-width="1" stroke-dasharray="2 8" stroke-dashoffset="1"/>
<line x1="34" y1="341.5" x2="1218" y2="341.5" stroke="#a0a0a0" stroke-width="1" stroke-dasharray="2 8" stroke-dashoffset="1"/>
<line x1="34" y1="406.5" x2="1218" y2="406.5" stroke="#a0a0a0" stroke-width="1" stroke-dasharray="2 8" stroke-dashoffset="1"/>
<line x1="34" y1="470.5" x2="1218" y2="470.5" stroke="#a0a0a0" stroke-width="1" stroke-dasharray="2 8" stroke-dashoffset="1"/>
<line x1="34" y1="535.5" x2="1218" y2="535.5" stroke="#a0a0a0" stroke-width="1" stroke-dasharray="2 8" stroke-dashoffset="1"/>
<line x1="34" y1="599.5" x2="1218" y2="599.5" stroke="#a0a0a0" stroke-width="1" stroke-dasharray="2 8" stroke-dashoffset="1"/>
<line x1="34" y1="664.5" x2="1218" y2="664.5" stroke="#a0a0a0" stroke-width="1" stroke-dasharray="2 8" stroke-dashoffset="1"/>
<line x1="34" y1="728.5" x2="1218" y2="728.5" stroke="#a0a0a0" stroke-width="1" stroke-dasharray="2 8" stroke-dashoffset="1"/>
<rect x="1220" y="148" width="4" height="1" fill="#a0a0a0"/>
<rect x="1220" y="213" width="4" height="1" fill="#a0a0a0"/>
<rect x="1220" y="277" width="4" height="1" fill="#a0a0a0"/>
<rect x="1220" y="341" width="4" height="1" fill="#a0a0a0"/>
<rect x="1220" y="406" width="4" height="1" fill="#a0a0a0"/>
<rect x="1220" y="470" width="4" height="1" fill="#a0a0a0"/>
<rect x="1220" y="535" width="4" height="1" fill="#a0a0a0"/>
<rect x="1220" y="599" width="4" height="1" fill="#a0a0a0"/>
<rect x="1220" y="664" width="4" height="1" fill="#a0a0a0"/>
<rect x="1220" y="729" width="4" height="1" fill="#a0a0a0"/>
<path fill="#ff0" d="M33 216h1v179h-1zM31 236h2v1h-2zM34 343h2v1h-2zM39 297h1v65h-1zM37 312h2v1h-2zM40 343h2v1h-2zM45 279h1v62h-1zM43 325h2v1h-2zM46 314h2v1h-2zM51 322h1v95h-1zM49 348h2v1h-2zM52 409h2v1h-2zM57 389h1v108h-1zM55 404h2v1h-2zM58 461h2v1h-2zM63 484h1v53h-1zM61 505h2v1h-2zM64 491h2v1h-2zM69 455h1v99h-1zM67 524h2v1h-2zM70 478h2v1h-2zM75 433h1v46h-1zM73 458h2v1h-2zM76 443h2v1h-2zM81 357h1v60h-1zM79 411h2v1h-2zM82 358h2v1h-2zM87 317h1v57h-1zM85 323h2v1h-2zM88 346h2v1h-2zM93 306h1v66h-1zM91 359h2v1h-2zM94 317h2v1h-2zM99 293h1v48h-1zM97 315h2v1h-2zM100 333h2v1h-2zM105 263h1v74h-1zM103 324h2v1h-2zM106 263h2v1h-2zM111 266h1v42h-1zM109 267h2v1h-2zM112 307h2v1h-2zM117 307h1v48h-1zM115 347h2v1h-2zM118 349h2v1h-2zM123 309h1v56h-1zM121 347h2v1h-2zM124 317h2v1h-2zM129 279h1v33h-1zM127 304h2v1h-2zM130 302h2v1h-2zM135 314h1v111h-1zM133 322h2v1h-2zM136 425h2v1h-2zM141 397h1v65h-1zM139 431h2v1h-2zM142 427h2v1h-2zM147 389h1v38h-1zM145 393h2v1h-2zM148 414h2v1h-2zM153 395h1v60h-1zM151 412h2v1h-2zM154 455h2v1h-2zM159 449h1v50h-1zM157 455h2v1h-2zM160 479h2v1h-2zM165 458h1v43h-1zM163 473h2v1h-2zM166 471h2v1h-2zM171 497h1v39h-1zM172 524h2v1h-2zM177 485h1v46h-1zM175 506h2v1h-2zM178 500h2v1h-2zM183 388h1v104h-1zM181 476h2v1h-2zM184 388h2v1h-2zM189 369h1v38h-1zM187 388h2v1h-2zM190 386h2v1h-2zM195 353h1v42h-1zM193 391h2v1h-2zM196 373h2v1h-2zM201 335h1v49h-1zM199 352h2v1h-2zM202 362h2v1h-2zM207 357h1v48h-1zM205 362h2v1h-2zM208 399h2v1h-2zM213 389h1v45h-1zM211 395h2v1h-2zM214 434h2v1h-2zM219 379h1v93h-1zM217 458h2v1h-2zM220 379h2v1h-2zM225 376h1v54h-1zM223 384h2v1h-2zM226 406h2v1h-2zM231 350h1v66h-1zM229 401h2v1h-2zM232 360h2v1h-2zM237 359h1v40h-1zM235 369h2v1h-2zM238 384h2v1h-2zM243 325h1v22h-1zM241 335h2v1h-2zM244 337h2v1h-2zM249 313h1v34h-1zM247 344h2v1h-2zM250 321h2v1h-2zM255 306h1v43h-1zM253 319h2v1h-2zM261 317h1v43h-1zM259 339h2v1h-2zM262 326h2v1h-2zM267 348h1v28h-1zM265 368h2v1h-2zM268 359h2v1h-2zM273 337h1v27h-1zM271 337h2v1h-2zM274 348h2v1h-2zM279 310h1v44h-1zM277 353h2v1h-2zM280 314h2v1h-2zM285 312h1v42h-1zM283 317h2v1h-2zM286 342h2v1h-2zM291 329h1v35h-1zM289 335h2v1h-2zM292 342h2v1h-2zM297 321h1v38h-1zM295 350h2v1h-2zM298 339h2v1h-2zM303 337h1v42h-1zM301 342h2v1h-2zM304 375h2v1h-2zM309 369h1v15h-1zM307 371h2v1h-2zM310 379h2v1h-2zM315 350h1v31h-1zM313 380h2v1h-2zM316 364h2v1h-2zM321 342h1v20h-1zM319 362h2v1h-2zM322 351h2v1h-2zM327 339h1v33h-1zM325 339h2v1h-2zM328 355h2v1h-2zM333 292h1v37h-1zM331 326h2v1h-2zM334 294h2v1h-2zM339 256h1v38h-1zM337 294h2v1h-2zM340 274h2v1h-2zM345 263h1v23h-1zM343 273h2v1h-2zM346 286h2v1h-2zM351 275h1v26h-1zM349 299h2v1h-2zM352 292h2v1h-2zM357 280h1v48h-1zM355 290h2v1h-2zM358 328h2v1h-2zM363 321h1v27h-1zM361 330h2v1h-2zM364 348h2v1h-2zM369 351h1v30h-1zM367 355h2v1h-2zM370 351h2v1h-2zM375 346h1v76h-1zM373 350h2v1h-2zM376 422h2v1h-2zM381 408h1v37h-1zM379 422h2v1h-2zM382 436h2v1h-2zM387 400h1v30h-1zM385 414h2v1h-2zM388 414h2v1h-2zM393 398h1v71h-1zM391 405h2v1h-2zM394 462h2v1h-2zM399 441h1v43h-1zM397 462h2v1h-2zM400 460h2v1h-2zM405 421h1v78h-1zM403 477h2v1h-2zM406 428h2v1h-2zM411 416h1v81h-1zM409 422h2v1h-2zM412 487h2v1h-2zM417 478h1v44h-1zM415 484h2v1h-2zM418 479h2v1h-2zM423 426h1v71h-1zM421 489h2v1h-2zM424 426h2v1h-2zM429 420h1v61h-1zM427 426h2v1h-2zM430 481h2v1h-2zM435 426h1v39h-1zM433 463h2v1h-2zM436 449h2v1h-2zM441 442h1v50h-1zM439 446h2v1h-2zM442 469h2v1h-2zM447 455h1v36h-1zM445 473h2v1h-2zM448 483h2v1h-2zM453 489h1v40h-1zM451 497h2v1h-2zM454 514h2v1h-2zM459 504h1v72h-1zM457 511h2v1h-2zM460 567h2v1h-2zM465 547h1v37h-1zM463 556h2v1h-2zM466 553h2v1h-2zM471 525h1v51h-1zM469 568h2v1h-2zM472 552h2v1h-2zM477 514h1v40h-1zM475 538h2v1h-2zM478 520h2v1h-2zM483 490h1v59h-1zM481 520h2v1h-2zM484 494h2v1h-2zM489 473h1v39h-1zM487 500h2v1h-2zM490 487h2v1h-2zM495 494h1v41h-1zM493 518h2v1h-2zM496 534h2v1h-2zM501 527h1v49h-1zM499 528h2v1h-2zM502 568h2v1h-2zM507 543h1v24h-1zM505 552h2v1h-2zM508 552h2v1h-2zM513 553h1v43h-1zM511 558h2v1h-2zM514 594h2v1h-2zM519 603h1v72h-1zM520 674h2v1h-2zM525 634h1v71h-1zM523 665h2v1h-2zM526 659h2v1h-2zM531 603h1v51h-1zM529 645h2v1h-2zM532 616h2v1h-2zM537 584h1v79h-1zM535 639h2v1h-2zM538 610h2v1h-2zM543 574h1v63h-1zM541 592h2v1h-2zM544 636h2v1h-2zM549 618h1v58h-1zM547 661h2v1h-2zM550 629h2v1h-2zM555 592h1v62h-1zM553 609h2v1h-2zM556 654h2v1h-2zM561 603h1v54h-1zM559 648h2v1h-2zM562 604h2v1h-2zM567 587h1v50h-1zM565 616h2v1h-2zM568 613h2v1h-2zM573 604h1v43h-1zM571 641h2v1h-2zM574 613h2v1h-2zM579 589h1v34h-1zM577 614h2v1h-2zM580 601h2v1h-2zM585 553h1v41h-1zM583 589h2v1h-2zM586 561h2v1h-2zM591 555h1v22h-1zM589 561h2v1h-2zM592 569h2v1h-2zM597 543h1v47h-1zM595 584h2v1h-2zM598 550h2v1h-2zM603 545h1v37h-1zM601 547h2v1h-2zM604 568h2v1h-2zM609 535h1v32h-1zM607 561h2v1h-2zM610 548h2v1h-2zM615 520h1v27h-1zM613 542h2v1h-2zM616 533h2v1h-2zM621 534h1v27h-1zM619 540h2v1h-2zM622 538h2v1h-2zM627 505h1v37h-1zM625 520h2v1h-2zM628 542h2v1h-2zM633 518h1v22h-1zM631 539h2v1h-2zM634 531h2v1h-2zM639 523h1v29h-1zM637 524h2v1h-2zM640 545h2v1h-2zM645 545h1v40h-1zM643 545h2v1h-2zM646 581h2v1h-2zM651 546h1v34h-1zM649 579h2v1h-2zM652 552h2v1h-2zM657 545h1v16h-1zM655 556h2v1h-2zM658 545h2v1h-2zM663 504h1v27h-1zM661 530h2v1h-2zM664 509h2v1h-2zM669 487h1v27h-1zM667 491h2v1h-2zM670 512h2v1h-2zM675 454h1v60h-1zM673 512h2v1h-2zM676 458h2v1h-2zM681 446h1v26h-1zM679 455h2v1h-2zM682 472h2v1h-2zM687 464h1v41h-1zM685 464h2v1h-2zM688 496h2v1h-2zM693 509h1v32h-1zM691 514h2v1h-2zM694 540h2v1h-2zM699 509h1v27h-1zM697 536h2v1h-2zM700 523h2v1h-2zM705 514h1v42h-1zM703 527h2v1h-2zM706 522h2v1h-2zM711 453h1v44h-1zM709 492h2v1h-2zM712 453h2v1h-2zM717 404h1v57h-1zM715 456h2v1h-2zM718 422h2v1h-2zM723 389h1v51h-1zM721 419h2v1h-2zM724 424h2v1h-2zM729 422h1v22h-1zM727 424h2v1h-2zM730 436h2v1h-2zM735 382h1v74h-1zM733 448h2v1h-2zM736 387h2v1h-2zM741 354h1v50h-1zM739 377h2v1h-2zM742 354h2v1h-2zM747 339h1v47h-1zM745 363h2v1h-2zM748 368h2v1h-2zM753 350h1v34h-1zM751 381h2v1h-2zM754 350h2v1h-2zM759 337h1v40h-1zM757 349h2v1h-2zM760 377h2v1h-2zM765 366h1v50h-1zM763 369h2v1h-2zM766 416h2v1h-2zM771 408h1v37h-1zM769 416h2v1h-2zM772 444h2v1h-2zM777 420h1v33h-1zM775 440h2v1h-2zM778 440h2v1h-2zM783 409h1v36h-1zM781 433h2v1h-2zM784 418h2v1h-2zM789 389h1v40h-1zM787 417h2v1h-2zM790 404h2v1h-2zM795 365h1v46h-1zM793 407h2v1h-2zM796 371h2v1h-2zM801 375h1v26h-1zM799 380h2v1h-2zM802 396h2v1h-2zM807 400h1v37h-1zM805 401h2v1h-2zM808 426h2v1h-2zM813 376h1v44h-1zM811 419h2v1h-2zM814 382h2v1h-2zM819 350h1v19h-1zM817 368h2v1h-2zM820 355h2v1h-2zM825 297h1v39h-1zM823 335h2v1h-2zM826 302h2v1h-2zM831 286h1v38h-1zM829 294h2v1h-2zM832 319h2v1h-2zM837 286h1v42h-1zM835 327h2v1h-2zM838 326h2v1h-2zM843 277h1v53h-1zM841 307h2v1h-2zM844 328h2v1h-2zM849 309h1v30h-1zM847 314h2v1h-2zM850 322h2v1h-2zM855 315h1v36h-1zM853 317h2v1h-2zM856 331h2v1h-2zM861 299h1v40h-1zM859 337h2v1h-2zM862 312h2v1h-2zM867 292h1v50h-1zM865 302h2v1h-2zM868 341h2v1h-2zM873 338h1v24h-1zM871 349h2v1h-2zM874 349h2v1h-2zM879 331h1v22h-1zM877 332h2v1h-2zM880 342h2v1h-2zM885 322h1v35h-1zM883 354h2v1h-2zM886 322h2v1h-2zM891 282h1v33h-1zM889 301h2v1h-2zM892 299h2v1h-2zM897 272h1v32h-1zM895 297h2v1h-2zM898 299h2v1h-2zM903 305h1v33h-1zM901 306h2v1h-2zM904 337h2v1h-2zM909 330h1v34h-1zM907 335h2v1h-2zM910 353h2v1h-2zM915 341h1v24h-1zM913 344h2v1h-2zM916 351h2v1h-2zM921 344h1v29h-1zM919 349h2v1h-2zM922 347h2v1h-2zM927 313h1v21h-1zM925 331h2v1h-2zM928 323h2v1h-2zM933 323h1v29h-1zM931 331h2v1h-2zM934 351h2v1h-2zM939 320h1v31h-1zM937 336h2v1h-2zM940 350h2v1h-2zM945 272h1v54h-1zM946 272h2v1h-2zM951 230h1v55h-1zM949 270h2v1h-2zM952 246h2v1h-2zM957 226h1v34h-1zM955 243h2v1h-2zM958 259h2v1h-2zM963 233h1v27h-1zM961 254h2v1h-2zM964 242h2v1h-2zM969 211h1v38h-1zM967 227h2v1h-2zM970 248h2v1h-2zM975 241h1v35h-1zM973 250h2v1h-2zM976 266h2v1h-2zM981 245h1v22h-1zM982 247h2v1h-2zM987 207h1v20h-1zM985 226h2v1h-2zM988 224h2v1h-2zM993 188h1v47h-1zM991 213h2v1h-2zM994 188h2v1h-2zM999 183h1v36h-1zM997 200h2v1h-2zM1000 219h2v1h-2zM1005 209h1v28h-1zM1003 231h2v1h-2zM1006 224h2v1h-2zM1011 213h1v51h-1zM1009 223h2v1h-2zM1012 261h2v1h-2zM1017 259h1v23h-1zM1015 261h2v1h-2zM1018 260h2v1h-2zM1023 240h1v30h-1zM1021 260h2v1h-2zM1024 246h2v1h-2zM1029 242h1v87h-1zM1027 246h2v1h-2zM1030 325h2v1h-2zM1035 316h1v30h-1zM1033 324h2v1h-2zM1036 333h2v1h-2zM1041 309h1v22h-1zM1039 329h2v1h-2zM1042 312h2v1h-2zM1047 302h1v36h-1zM1045 307h2v1h-2zM1048 317h2v1h-2zM1053 301h1v23h-1zM1051 302h2v1h-2zM1054 321h2v1h-2zM1059 296h1v38h-1zM1057 329h2v1h-2zM1060 306h2v1h-2zM1065 287h1v30h-1zM1063 304h2v1h-2zM1066 314h2v1h-2zM1071 293h1v24h-1zM1069 312h2v1h-2zM1072 302h2v1h-2zM1077 302h1v34h-1zM1075 303h2v1h-2zM1078 335h2v1h-2zM1083 329h1v17h-1zM1081 331h2v1h-2zM1084 336h2v1h-2zM1089 342h1v24h-1zM1087 348h2v1h-2zM1090 352h2v1h-2zM1095 337h1v25h-1zM1093 350h2v1h-2zM1096 356h2v1h-2zM1101 350h1v27h-1zM1099 371h2v1h-2zM1102 359h2v1h-2zM1107 344h1v28h-1zM1105 352h2v1h-2zM1108 352h2v1h-2zM1113 355h1v20h-1zM1111 358h2v1h-2zM1114 369h2v1h-2z"/>
<rect x="1209" y="106" width="9" height="8" fill="#0f0"/>
<rect x="1209" y="721" width="9" height="8" fill="#0f0"/>
<rect x="1209" y="114" width="9" height="7" fill="#0a0"/>
<rect x="1210.5" y="114.5" width="6" height="5" fill="#000" stroke="#fff" stroke-width="1"/>
<rect x="1212" y="116" width="3" height="2" fill="#fff"/>
<clipPath id="cp"><rect x="34" y="106" width="1184" height="623"/></clipPath>
<g clip-path="url(#cp)" fill="none" stroke="#f00">
<polyline points="33.5,143.18 39.5,141.76 45.5,141.30 51.5,140.84 57.5,140.38 63.5,139.92 69.5,138.51 75.5,138.05 81.5,137.60 87.5,137.14 93.5,136.69 99.5,135.29 105.5,134.84 111.5,134.39 117.5,133.94 123.5,133.50 129.5,132.10 135.5,131.18 141.5,130.73 147.5,130.29 153.5,128.90 159.5,128.46 165.5,128.02 171.5,127.58 177.5,127.14 183.5,125.75 189.5,125.31 195.5,124.87 201.5,124.43 207.5,124.00 213.5,122.60 219.5,122.16 225.5,121.72 231.5,121.28 237.5,120.84 243.5,119.44 249.5,118.99 255.5,118.55 261.5,118.10 267.5,117.65 273.5,116.24 279.5,115.78 285.5,115.33 291.5,114.87 297.5,114.41 303.5,112.99 309.5,112.52 315.5,109.66 321.5,109.18 327.5,108.71 333.5,106.5 339.5,106.5" stroke-width="1"/>
<polyline points="33.5,201.18 39.5,199.76 45.5,199.30 51.5,198.84 57.5,198.38 63.5,197.92 69.5,196.51 75.5,196.05 81.5,195.60 87.5,195.14 93.5,194.69 99.5,193.29 105.5,192.84 111.5,192.39 117.5,191.94 123.5,191.50 129.5,190.10 135.5,189.18 141.5,188.73 147.5,188.29 153.5,186.90 159.5,186.46 165.5,186.02 171.5,185.58 177.5,185.14 183.5,183.75 189.5,183.31 195.5,182.87 201.5,182.43 207.5,182.00 213.5,180.60 219.5,180.16 225.5,179.72 231.5,179.28 237.5,178.84 243.5,177.44 249.5,176.99 255.5,176.55 261.5,176.10 267.5,175.65 273.5,174.24 279.5,173.78 285.5,173.33 291.5,172.87 297.5,172.41 303.5,170.99 309.5,170.52 315.5,167.66 321.5,167.18 327.5,166.71 333.5,164.31 339.5,163.83 345.5,163.35 351.5,162.86 357.5,162.37 363.5,160.92 369.5,160.43 375.5,159.93 381.5,159.43 387.5,158.93 393.5,157.46 399.5,156.96 405.5,156.45 411.5,155.94 417.5,155.42 423.5,153.95 429.5,153.44 435.5,152.92 441.5,152.40 447.5,151.89 453.5,150.41 459.5,149.89 465.5,149.37 471.5,148.85 477.5,148.33 483.5,146.86 489.5,146.34 495.5,145.82 501.5,145.30 507.5,144.78 513.5,143.31 519.5,142.79 525.5,142.28 531.5,141.76 537.5,141.25 543.5,139.78 549.5,139.27 555.5,138.76 561.5,138.25 567.5,137.74 573.5,136.28 579.5,135.78 585.5,135.27 591.5,134.77 597.5,134.27 603.5,132.81 609.5,132.31 615.5,131.82 621.5,131.32 627.5,130.83 633.5,129.38 639.5,128.88 645.5,128.39 651.5,127.90 657.5,127.41 663.5,125.96 669.5,125.48 675.5,124.99 681.5,124.50 687.5,124.02 693.5,122.57 699.5,122.09 705.5,121.60 711.5,121.12 717.5,120.64 723.5,119.19 729.5,118.71 735.5,118.23 741.5,117.74 747.5,115.35 753.5,114.86 759.5,114.38 765.5,113.90 771.5,112.45 777.5,111.97 783.5,111.48 789.5,110.99 795.5,110.51 801.5,109.06 807.5,108.57 813.5,108.07 819.5,107.58 825.5,107 831.5,107" stroke-width="1.75"/>
<polyline points="33.5,259.18 39.5,257.76 45.5,257.30 51.5,256.84 57.5,256.38 63.5,255.92 69.5,254.51 75.5,254.05 81.5,253.60 87.5,253.14 93.5,252.69 99.5,251.29 105.5,250.84 111.5,250.39 117.5,249.94 123.5,249.50 129.5,248.10 135.5,247.18 141.5,246.73 147.5,246.29 153.5,244.90 159.5,244.46 165.5,244.02 171.5,243.58 177.5,243.14 183.5,241.75 189.5,241.31 195.5,240.87 201.5,240.43 207.5,240.00 213.5,238.60 219.5,238.16 225.5,237.72 231.5,237.28 237.5,236.84 243.5,235.44 249.5,234.99 255.5,234.55 261.5,234.10 267.5,233.65 273.5,232.24 279.5,231.78 285.5,231.33 291.5,230.87 297.5,230.41 303.5,228.99 309.5,228.52 315.5,225.66 321.5,225.18 327.5,224.71 333.5,222.31 339.5,221.83 345.5,221.35 351.5,220.86 357.5,220.37 363.5,218.92 369.5,218.43 375.5,217.93 381.5,217.43 387.5,216.93 393.5,215.46 399.5,214.96 405.5,214.45 411.5,213.94 417.5,213.42 423.5,211.95 429.5,211.44 435.5,210.92 441.5,210.40 447.5,209.89 453.5,208.41 459.5,207.89 465.5,207.37 471.5,206.85 477.5,206.33 483.5,204.86 489.5,204.34 495.5,203.82 501.5,203.30 507.5,202.78 513.5,201.31 519.5,200.79 525.5,200.28 531.5,199.76 537.5,199.25 543.5,197.78 549.5,197.27 555.5,196.76 561.5,196.25 567.5,195.74 573.5,194.28 579.5,193.78 585.5,193.27 591.5,192.77 597.5,192.27 603.5,190.81 609.5,190.31 615.5,189.82 621.5,189.32 627.5,188.83 633.5,187.38 639.5,186.88 645.5,186.39 651.5,185.90 657.5,185.41 663.5,183.96 669.5,183.48 675.5,182.99 681.5,182.50 687.5,182.02 693.5,180.57 699.5,180.09 705.5,179.60 711.5,179.12 717.5,178.64 723.5,177.19 729.5,176.71 735.5,176.23 741.5,175.74 747.5,173.35 753.5,172.86 759.5,172.38 765.5,171.90 771.5,170.45 777.5,169.97 783.5,169.48 789.5,168.99 795.5,168.51 801.5,167.06 807.5,166.57 813.5,166.07 819.5,165.58 825.5,163.64 831.5,163.14 837.5,162.64 843.5,162.13 849.5,161.62 855.5,160.15 861.5,159.63 867.5,159.11 873.5,158.59 879.5,158.07 885.5,156.58 891.5,156.05 897.5,155.52 903.5,154.99 909.5,154.45 915.5,152.96 921.5,152.43 927.5,151.89 933.5,151.36 939.5,150.83 945.5,149.35 951.5,148.83 957.5,148.31 963.5,147.80 969.5,147.29 975.5,145.84 981.5,145.34 987.5,144.86 993.5,143.90 999.5,142.47 1005.5,142.01 1011.5,141.55 1017.5,141.10 1023.5,140.65 1029.5,139.26 1035.5,138.82 1041.5,138.39 1047.5,137.96 1053.5,137.54 1059.5,136.15 1065.5,135.73 1071.5,135.31 1077.5,134.89 1083.5,134.46 1089.5,133.08 1095.5,132.65 1101.5,132.22 1107.5,131.79 1113.5,131.36 1119.5,129.96 1125.5,129.52 1131.5,129.08 1137.5,128.63 1143.5,128.18 1149.5,126.77 1155.5,126.31 1161.5,125.85 1167.5,125.39 1173.5,124.92 1179.5,123.50 1185.5,123.03 1191.5,122.56 1197.5,122.09 1203.5,121.62 1209.5,120.19 1215.5,119.72 1221.5,119.24 1227.5,118.77" stroke-width="1"/>
<polyline points="33.5,317.18 39.5,315.76 45.5,315.30 51.5,314.84 57.5,314.38 63.5,313.92 69.5,312.51 75.5,312.05 81.5,311.60 87.5,311.14 93.5,310.69 99.5,309.29 105.5,308.84 111.5,308.39 117.5,307.94 123.5,307.50 129.5,306.10 135.5,305.18 141.5,304.73 147.5,304.29 153.5,302.90 159.5,302.46 165.5,302.02 171.5,301.58 177.5,301.14 183.5,299.75 189.5,299.31 195.5,298.87 201.5,298.43 207.5,298.00 213.5,296.60 219.5,296.16 225.5,295.72 231.5,295.28 237.5,294.84 243.5,293.44 249.5,292.99 255.5,292.55 261.5,292.10 267.5,291.65 273.5,290.24 279.5,289.78 285.5,289.33 291.5,288.87 297.5,288.41 303.5,286.99 309.5,286.52 315.5,283.66 321.5,283.18 327.5,282.71 333.5,280.31 339.5,279.83 345.5,279.35 351.5,278.86 357.5,278.37 363.5,276.92 369.5,276.43 375.5,275.93 381.5,275.43 387.5,274.93 393.5,273.46 399.5,272.96 405.5,272.45 411.5,271.94 417.5,271.42 423.5,269.95 429.5,269.44 435.5,268.92 441.5,268.40 447.5,267.89 453.5,266.41 459.5,265.89 465.5,265.37 471.5,264.85 477.5,264.33 483.5,262.86 489.5,262.34 495.5,261.82 501.5,261.30 507.5,260.78 513.5,259.31 519.5,258.79 525.5,258.28 531.5,257.76 537.5,257.25 543.5,255.78 549.5,255.27 555.5,254.76 561.5,254.25 567.5,253.74 573.5,252.28 579.5,251.78 585.5,251.27 591.5,250.77 597.5,250.27 603.5,248.81 609.5,248.31 615.5,247.82 621.5,247.32 627.5,246.83 633.5,245.38 639.5,244.88 645.5,244.39 651.5,243.90 657.5,243.41 663.5,241.96 669.5,241.48 675.5,240.99 681.5,240.50 687.5,240.02 693.5,238.57 699.5,238.09 705.5,237.60 711.5,237.12 717.5,236.64 723.5,235.19 729.5,234.71 735.5,234.23 741.5,233.74 747.5,231.35 753.5,230.86 759.5,230.38 765.5,229.90 771.5,228.45 777.5,227.97 783.5,227.48 789.5,226.99 795.5,226.51 801.5,225.06 807.5,224.57 813.5,224.07 819.5,223.58 825.5,221.64 831.5,221.14 837.5,220.64 843.5,220.13 849.5,219.62 855.5,218.15 861.5,217.63 867.5,217.11 873.5,216.59 879.5,216.07 885.5,214.58 891.5,214.05 897.5,213.52 903.5,212.99 909.5,212.45 915.5,210.96 921.5,210.43 927.5,209.89 933.5,209.36 939.5,208.83 945.5,207.35 951.5,206.83 957.5,206.31 963.5,205.80 969.5,205.29 975.5,203.84 981.5,203.34 987.5,202.86 993.5,201.90 999.5,200.47 1005.5,200.01 1011.5,199.55 1017.5,199.10 1023.5,198.65 1029.5,197.26 1035.5,196.82 1041.5,196.39 1047.5,195.96 1053.5,195.54 1059.5,194.15 1065.5,193.73 1071.5,193.31 1077.5,192.89 1083.5,192.46 1089.5,191.08 1095.5,190.65 1101.5,190.22 1107.5,189.79 1113.5,189.36 1119.5,187.96 1125.5,187.52 1131.5,187.08 1137.5,186.63 1143.5,186.18 1149.5,184.77 1155.5,184.31 1161.5,183.85 1167.5,183.39 1173.5,182.92 1179.5,181.50 1185.5,181.03 1191.5,180.56 1197.5,180.09 1203.5,179.62 1209.5,178.19 1215.5,177.72 1221.5,177.24 1227.5,176.77" stroke-width="1"/>
<polyline points="33.5,375.18 39.5,373.76 45.5,373.30 51.5,372.84 57.5,372.38 63.5,371.92 69.5,370.51 75.5,370.05 81.5,369.60 87.5,369.14 93.5,368.69 99.5,367.29 105.5,366.84 111.5,366.39 117.5,365.94 123.5,365.50 129.5,364.10 135.5,363.18 141.5,362.73 147.5,362.29 153.5,360.90 159.5,360.46 165.5,360.02 171.5,359.58 177.5,359.14 183.5,357.75 189.5,357.31 195.5,356.87 201.5,356.43 207.5,356.00 213.5,354.60 219.5,354.16 225.5,353.72 231.5,353.28 237.5,352.84 243.5,351.44 249.5,350.99 255.5,350.55 261.5,350.10 267.5,349.65 273.5,348.24 279.5,347.78 285.5,347.33 291.5,346.87 297.5,346.41 303.5,344.99 309.5,344.52 315.5,341.66 321.5,341.18 327.5,340.71 333.5,338.31 339.5,337.83 345.5,337.35 351.5,336.86 357.5,336.37 363.5,334.92 369.5,334.43 375.5,333.93 381.5,333.43 387.5,332.93 393.5,331.46 399.5,330.96 405.5,330.45 411.5,329.94 417.5,329.42 423.5,327.95 429.5,327.44 435.5,326.92 441.5,326.40 447.5,325.89 453.5,324.41 459.5,323.89 465.5,323.37 471.5,322.85 477.5,322.33 483.5,320.86 489.5,320.34 495.5,319.82 501.5,319.30 507.5,318.78 513.5,317.31 519.5,316.79 525.5,316.28 531.5,315.76 537.5,315.25 543.5,313.78 549.5,313.27 555.5,312.76 561.5,312.25 567.5,311.74 573.5,310.28 579.5,309.78 585.5,309.27 591.5,308.77 597.5,308.27 603.5,306.81 609.5,306.31 615.5,305.82 621.5,305.32 627.5,304.83 633.5,303.38 639.5,302.88 645.5,302.39 651.5,301.90 657.5,301.41 663.5,299.96 669.5,299.48 675.5,298.99 681.5,298.50 687.5,298.02 693.5,296.57 699.5,296.09 705.5,295.60 711.5,295.12 717.5,294.64 723.5,293.19 729.5,292.71 735.5,292.23 741.5,291.74 747.5,289.35 753.5,288.86 759.5,288.38 765.5,287.90 771.5,286.45 777.5,285.97 783.5,285.48 789.5,284.99 795.5,284.51 801.5,283.06 807.5,282.57 813.5,282.07 819.5,281.58 825.5,279.64 831.5,279.14 837.5,278.64 843.5,278.13 849.5,277.62 855.5,276.15 861.5,275.63 867.5,275.11 873.5,274.59 879.5,274.07 885.5,272.58 891.5,272.05 897.5,271.52 903.5,270.99 909.5,270.45 915.5,268.96 921.5,268.43 927.5,267.89 933.5,267.36 939.5,266.83 945.5,265.35 951.5,264.83 957.5,264.31 963.5,263.80 969.5,263.29 975.5,261.84 981.5,261.34 987.5,260.86 993.5,259.90 999.5,258.47 1005.5,258.01 1011.5,257.55 1017.5,257.10 1023.5,256.65 1029.5,255.26 1035.5,254.82 1041.5,254.39 1047.5,253.96 1053.5,253.54 1059.5,252.15 1065.5,251.73 1071.5,251.31 1077.5,250.89 1083.5,250.46 1089.5,249.08 1095.5,248.65 1101.5,248.22 1107.5,247.79 1113.5,247.36 1119.5,245.96 1125.5,245.52 1131.5,245.08 1137.5,244.63 1143.5,244.18 1149.5,242.77 1155.5,242.31 1161.5,241.85 1167.5,241.39 1173.5,240.92 1179.5,239.50 1185.5,239.03 1191.5,238.56 1197.5,238.09 1203.5,237.62 1209.5,236.19 1215.5,235.72 1221.5,235.24 1227.5,234.77" stroke-width="1"/>
<polyline points="33.5,433.18 39.5,431.76 45.5,431.30 51.5,430.84 57.5,430.38 63.5,429.92 69.5,428.51 75.5,428.05 81.5,427.60 87.5,427.14 93.5,426.69 99.5,425.29 105.5,424.84 111.5,424.39 117.5,423.94 123.5,423.50 129.5,422.10 135.5,421.18 141.5,420.73 147.5,420.29 153.5,418.90 159.5,418.46 165.5,418.02 171.5,417.58 177.5,417.14 183.5,415.75 189.5,415.31 195.5,414.87 201.5,414.43 207.5,414.00 213.5,412.60 219.5,412.16 225.5,411.72 231.5,411.28 237.5,410.84 243.5,409.44 249.5,408.99 255.5,408.55 261.5,408.10 267.5,407.65 273.5,406.24 279.5,405.78 285.5,405.33 291.5,404.87 297.5,404.41 303.5,402.99 309.5,402.52 315.5,399.66 321.5,399.18 327.5,398.71 333.5,396.31 339.5,395.83 345.5,395.35 351.5,394.86 357.5,394.37 363.5,392.92 369.5,392.43 375.5,391.93 381.5,391.43 387.5,390.93 393.5,389.46 399.5,388.96 405.5,388.45 411.5,387.94 417.5,387.42 423.5,385.95 429.5,385.44 435.5,384.92 441.5,384.40 447.5,383.89 453.5,382.41 459.5,381.89 465.5,381.37 471.5,380.85 477.5,380.33 483.5,378.86 489.5,378.34 495.5,377.82 501.5,377.30 507.5,376.78 513.5,375.31 519.5,374.79 525.5,374.28 531.5,373.76 537.5,373.25 543.5,371.78 549.5,371.27 555.5,370.76 561.5,370.25 567.5,369.74 573.5,368.28 579.5,367.78 585.5,367.27 591.5,366.77 597.5,366.27 603.5,364.81 609.5,364.31 615.5,363.82 621.5,363.32 627.5,362.83 633.5,361.38 639.5,360.88 645.5,360.39 651.5,359.90 657.5,359.41 663.5,357.96 669.5,357.48 675.5,356.99 681.5,356.50 687.5,356.02 693.5,354.57 699.5,354.09 705.5,353.60 711.5,353.12 717.5,352.64 723.5,351.19 729.5,350.71 735.5,350.23 741.5,349.74 747.5,347.35 753.5,346.86 759.5,346.38 765.5,345.90 771.5,344.45 777.5,343.97 783.5,343.48 789.5,342.99 795.5,342.51 801.5,341.06 807.5,340.57 813.5,340.07 819.5,339.58 825.5,337.64 831.5,337.14 837.5,336.64 843.5,336.13 849.5,335.62 855.5,334.15 861.5,333.63 867.5,333.11 873.5,332.59 879.5,332.07 885.5,330.58 891.5,330.05 897.5,329.52 903.5,328.99 909.5,328.45 915.5,326.96 921.5,326.43 927.5,325.89 933.5,325.36 939.5,324.83 945.5,323.35 951.5,322.83 957.5,322.31 963.5,321.80 969.5,321.29 975.5,319.84 981.5,319.34 987.5,318.86 993.5,317.90 999.5,316.47 1005.5,316.01 1011.5,315.55 1017.5,315.10 1023.5,314.65 1029.5,313.26 1035.5,312.82 1041.5,312.39 1047.5,311.96 1053.5,311.54 1059.5,310.15 1065.5,309.73 1071.5,309.31 1077.5,308.89 1083.5,308.46 1089.5,307.08 1095.5,306.65 1101.5,306.22 1107.5,305.79 1113.5,305.36 1119.5,303.96 1125.5,303.52 1131.5,303.08 1137.5,302.63 1143.5,302.18 1149.5,300.77 1155.5,300.31 1161.5,299.85 1167.5,299.39 1173.5,298.92 1179.5,297.50 1185.5,297.03 1191.5,296.56 1197.5,296.09 1203.5,295.62 1209.5,294.19 1215.5,293.72 1221.5,293.24 1227.5,292.77" stroke-width="1.75"/>
<polyline points="33.5,491.18 39.5,489.76 45.5,489.30 51.5,488.84 57.5,488.38 63.5,487.92 69.5,486.51 75.5,486.05 81.5,485.60 87.5,485.14 93.5,484.69 99.5,483.29 105.5,482.84 111.5,482.39 117.5,481.94 123.5,481.50 129.5,480.10 135.5,479.18 141.5,478.73 147.5,478.29 153.5,476.90 159.5,476.46 165.5,476.02 171.5,475.58 177.5,475.14 183.5,473.75 189.5,473.31 195.5,472.87 201.5,472.43 207.5,472.00 213.5,470.60 219.5,470.16 225.5,469.72 231.5,469.28 237.5,468.84 243.5,467.44 249.5,466.99 255.5,466.55 261.5,466.10 267.5,465.65 273.5,464.24 279.5,463.78 285.5,463.33 291.5,462.87 297.5,462.41 303.5,460.99 309.5,460.52 315.5,457.66 321.5,457.18 327.5,456.71 333.5,454.31 339.5,453.83 345.5,453.35 351.5,452.86 357.5,452.37 363.5,450.92 369.5,450.43 375.5,449.93 381.5,449.43 387.5,448.93 393.5,447.46 399.5,446.96 405.5,446.45 411.5,445.94 417.5,445.42 423.5,443.95 429.5,443.44 435.5,442.92 441.5,442.40 447.5,441.89 453.5,440.41 459.5,439.89 465.5,439.37 471.5,438.85 477.5,438.33 483.5,436.86 489.5,436.34 495.5,435.82 501.5,435.30 507.5,434.78 513.5,433.31 519.5,432.79 525.5,432.28 531.5,431.76 537.5,431.25 543.5,429.78 549.5,429.27 555.5,428.76 561.5,428.25 567.5,427.74 573.5,426.28 579.5,425.78 585.5,425.27 591.5,424.77 597.5,424.27 603.5,422.81 609.5,422.31 615.5,421.82 621.5,421.32 627.5,420.83 633.5,419.38 639.5,418.88 645.5,418.39 651.5,417.90 657.5,417.41 663.5,415.96 669.5,415.48 675.5,414.99 681.5,414.50 687.5,414.02 693.5,412.57 699.5,412.09 705.5,411.60 711.5,411.12 717.5,410.64 723.5,409.19 729.5,408.71 735.5,408.23 741.5,407.74 747.5,405.35 753.5,404.86 759.5,404.38 765.5,403.90 771.5,402.45 777.5,401.97 783.5,401.48 789.5,400.99 795.5,400.51 801.5,399.06 807.5,398.57 813.5,398.07 819.5,397.58 825.5,395.64 831.5,395.14 837.5,394.64 843.5,394.13 849.5,393.62 855.5,392.15 861.5,391.63 867.5,391.11 873.5,390.59 879.5,390.07 885.5,388.58 891.5,388.05 897.5,387.52 903.5,386.99 909.5,386.45 915.5,384.96 921.5,384.43 927.5,383.89 933.5,383.36 939.5,382.83 945.5,381.35 951.5,380.83 957.5,380.31 963.5,379.80 969.5,379.29 975.5,377.84 981.5,377.34 987.5,376.86 993.5,375.90 999.5,374.47 1005.5,374.01 1011.5,373.55 1017.5,373.10 1023.5,372.65 1029.5,371.26 1035.5,370.82 1041.5,370.39 1047.5,369.96 1053.5,369.54 1059.5,368.15 1065.5,367.73 1071.5,367.31 1077.5,366.89 1083.5,366.46 1089.5,365.08 1095.5,364.65 1101.5,364.22 1107.5,363.79 1113.5,363.36 1119.5,361.96 1125.5,361.52 1131.5,361.08 1137.5,360.63 1143.5,360.18 1149.5,358.77 1155.5,358.31 1161.5,357.85 1167.5,357.39 1173.5,356.92 1179.5,355.50 1185.5,355.03 1191.5,354.56 1197.5,354.09 1203.5,353.62 1209.5,352.19 1215.5,351.72 1221.5,351.24 1227.5,350.77" stroke-width="1"/>
<polyline points="33.5,549.18 39.5,547.76 45.5,547.30 51.5,546.84 57.5,546.38 63.5,545.92 69.5,544.51 75.5,544.05 81.5,543.60 87.5,543.14 93.5,542.69 99.5,541.29 105.5,540.84 111.5,540.39 117.5,539.94 123.5,539.50 129.5,538.10 135.5,537.18 141.5,536.73 147.5,536.29 153.5,534.90 159.5,534.46 165.5,534.02 171.5,533.58 177.5,533.14 183.5,531.75 189.5,531.31 195.5,530.87 201.5,530.43 207.5,530.00 213.5,528.60 219.5,528.16 225.5,527.72 231.5,527.28 237.5,526.84 243.5,525.44 249.5,524.99 255.5,524.55 261.5,524.10 267.5,523.65 273.5,522.24 279.5,521.78 285.5,521.33 291.5,520.87 297.5,520.41 303.5,518.99 309.5,518.52 315.5,515.66 321.5,515.18 327.5,514.71 333.5,512.31 339.5,511.83 345.5,511.35 351.5,510.86 357.5,510.37 363.5,508.92 369.5,508.43 375.5,507.93 381.5,507.43 387.5,506.93 393.5,505.46 399.5,504.96 405.5,504.45 411.5,503.94 417.5,503.42 423.5,501.95 429.5,501.44 435.5,500.92 441.5,500.40 447.5,499.89 453.5,498.41 459.5,497.89 465.5,497.37 471.5,496.85 477.5,496.33 483.5,494.86 489.5,494.34 495.5,493.82 501.5,493.30 507.5,492.78 513.5,491.31 519.5,490.79 525.5,490.28 531.5,489.76 537.5,489.25 543.5,487.78 549.5,487.27 555.5,486.76 561.5,486.25 567.5,485.74 573.5,484.28 579.5,483.78 585.5,483.27 591.5,482.77 597.5,482.27 603.5,480.81 609.5,480.31 615.5,479.82 621.5,479.32 627.5,478.83 633.5,477.38 639.5,476.88 645.5,476.39 651.5,475.90 657.5,475.41 663.5,473.96 669.5,473.48 675.5,472.99 681.5,472.50 687.5,472.02 693.5,470.57 699.5,470.09 705.5,469.60 711.5,469.12 717.5,468.64 723.5,467.19 729.5,466.71 735.5,466.23 741.5,465.74 747.5,463.35 753.5,462.86 759.5,462.38 765.5,461.90 771.5,460.45 777.5,459.97 783.5,459.48 789.5,458.99 795.5,458.51 801.5,457.06 807.5,456.57 813.5,456.07 819.5,455.58 825.5,453.64 831.5,453.14 837.5,452.64 843.5,452.13 849.5,451.62 855.5,450.15 861.5,449.63 867.5,449.11 873.5,448.59 879.5,448.07 885.5,446.58 891.5,446.05 897.5,445.52 903.5,444.99 909.5,444.45 915.5,442.96 921.5,442.43 927.5,441.89 933.5,441.36 939.5,440.83 945.5,439.35 951.5,438.83 957.5,438.31 963.5,437.80 969.5,437.29 975.5,435.84 981.5,435.34 987.5,434.86 993.5,433.90 999.5,432.47 1005.5,432.01 1011.5,431.55 1017.5,431.10 1023.5,430.65 1029.5,429.26 1035.5,428.82 1041.5,428.39 1047.5,427.96 1053.5,427.54 1059.5,426.15 1065.5,425.73 1071.5,425.31 1077.5,424.89 1083.5,424.46 1089.5,423.08 1095.5,422.65 1101.5,422.22 1107.5,421.79 1113.5,421.36 1119.5,419.96 1125.5,419.52 1131.5,419.08 1137.5,418.63 1143.5,418.18 1149.5,416.77 1155.5,416.31 1161.5,415.85 1167.5,415.39 1173.5,414.92 1179.5,413.50 1185.5,413.03 1191.5,412.56 1197.5,412.09 1203.5,411.62 1209.5,410.19 1215.5,409.72 1221.5,409.24 1227.5,408.77" stroke-width="1"/>
<polyline points="33.5,607.18 39.5,605.76 45.5,605.30 51.5,604.84 57.5,604.38 63.5,603.92 69.5,602.51 75.5,602.05 81.5,601.60 87.5,601.14 93.5,600.69 99.5,599.29 105.5,598.84 111.5,598.39 117.5,597.94 123.5,597.50 129.5,596.10 135.5,595.18 141.5,594.73 147.5,594.29 153.5,592.90 159.5,592.46 165.5,592.02 171.5,591.58 177.5,591.14 183.5,589.75 189.5,589.31 195.5,588.87 201.5,588.43 207.5,588.00 213.5,586.60 219.5,586.16 225.5,585.72 231.5,585.28 237.5,584.84 243.5,583.44 249.5,582.99 255.5,582.55 261.5,582.10 267.5,581.65 273.5,580.24 279.5,579.78 285.5,579.33 291.5,578.87 297.5,578.41 303.5,576.99 309.5,576.52 315.5,573.66 321.5,573.18 327.5,572.71 333.5,570.31 339.5,569.83 345.5,569.35 351.5,568.86 357.5,568.37 363.5,566.92 369.5,566.43 375.5,565.93 381.5,565.43 387.5,564.93 393.5,563.46 399.5,562.96 405.5,562.45 411.5,561.94 417.5,561.42 423.5,559.95 429.5,559.44 435.5,558.92 441.5,558.40 447.5,557.89 453.5,556.41 459.5,555.89 465.5,555.37 471.5,554.85 477.5,554.33 483.5,552.86 489.5,552.34 495.5,551.82 501.5,551.30 507.5,550.78 513.5,549.31 519.5,548.79 525.5,548.28 531.5,547.76 537.5,547.25 543.5,545.78 549.5,545.27 555.5,544.76 561.5,544.25 567.5,543.74 573.5,542.28 579.5,541.78 585.5,541.27 591.5,540.77 597.5,540.27 603.5,538.81 609.5,538.31 615.5,537.82 621.5,537.32 627.5,536.83 633.5,535.38 639.5,534.88 645.5,534.39 651.5,533.90 657.5,533.41 663.5,531.96 669.5,531.48 675.5,530.99 681.5,530.50 687.5,530.02 693.5,528.57 699.5,528.09 705.5,527.60 711.5,527.12 717.5,526.64 723.5,525.19 729.5,524.71 735.5,524.23 741.5,523.74 747.5,521.35 753.5,520.86 759.5,520.38 765.5,519.90 771.5,518.45 777.5,517.97 783.5,517.48 789.5,516.99 795.5,516.51 801.5,515.06 807.5,514.57 813.5,514.07 819.5,513.58 825.5,511.64 831.5,511.14 837.5,510.64 843.5,510.13 849.5,509.62 855.5,508.15 861.5,507.63 867.5,507.11 873.5,506.59 879.5,506.07 885.5,504.58 891.5,504.05 897.5,503.52 903.5,502.99 909.5,502.45 915.5,500.96 921.5,500.43 927.5,499.89 933.5,499.36 939.5,498.83 945.5,497.35 951.5,496.83 957.5,496.31 963.5,495.80 969.5,495.29 975.5,493.84 981.5,493.34 987.5,492.86 993.5,491.90 999.5,490.47 1005.5,490.01 1011.5,489.55 1017.5,489.10 1023.5,488.65 1029.5,487.26 1035.5,486.82 1041.5,486.39 1047.5,485.96 1053.5,485.54 1059.5,484.15 1065.5,483.73 1071.5,483.31 1077.5,482.89 1083.5,482.46 1089.5,481.08 1095.5,480.65 1101.5,480.22 1107.5,479.79 1113.5,479.36 1119.5,477.96 1125.5,477.52 1131.5,477.08 1137.5,476.63 1143.5,476.18 1149.5,474.77 1155.5,474.31 1161.5,473.85 1167.5,473.39 1173.5,472.92 1179.5,471.50 1185.5,471.03 1191.5,470.56 1197.5,470.09 1203.5,469.62 1209.5,468.19 1215.5,467.72 1221.5,467.24 1227.5,466.77" stroke-width="1"/>
<polyline points="33.5,665.18 39.5,663.76 45.5,663.30 51.5,662.84 57.5,662.38 63.5,661.92 69.5,660.51 75.5,660.05 81.5,659.60 87.5,659.14 93.5,658.69 99.5,657.29 105.5,656.84 111.5,656.39 117.5,655.94 123.5,655.50 129.5,654.10 135.5,653.18 141.5,652.73 147.5,652.29 153.5,650.90 159.5,650.46 165.5,650.02 171.5,649.58 177.5,649.14 183.5,647.75 189.5,647.31 195.5,646.87 201.5,646.43 207.5,646.00 213.5,644.60 219.5,644.16 225.5,643.72 231.5,643.28 237.5,642.84 243.5,641.44 249.5,640.99 255.5,640.55 261.5,640.10 267.5,639.65 273.5,638.24 279.5,637.78 285.5,637.33 291.5,636.87 297.5,636.41 303.5,634.99 309.5,634.52 315.5,631.66 321.5,631.18 327.5,630.71 333.5,628.31 339.5,627.83 345.5,627.35 351.5,626.86 357.5,626.37 363.5,624.92 369.5,624.43 375.5,623.93 381.5,623.43 387.5,622.93 393.5,621.46 399.5,620.96 405.5,620.45 411.5,619.94 417.5,619.42 423.5,617.95 429.5,617.44 435.5,616.92 441.5,616.40 447.5,615.89 453.5,614.41 459.5,613.89 465.5,613.37 471.5,612.85 477.5,612.33 483.5,610.86 489.5,610.34 495.5,609.82 501.5,609.30 507.5,608.78 513.5,607.31 519.5,606.79 525.5,606.28 531.5,605.76 537.5,605.25 543.5,603.78 549.5,603.27 555.5,602.76 561.5,602.25 567.5,601.74 573.5,600.28 579.5,599.78 585.5,599.27 591.5,598.77 597.5,598.27 603.5,596.81 609.5,596.31 615.5,595.82 621.5,595.32 627.5,594.83 633.5,593.38 639.5,592.88 645.5,592.39 651.5,591.90 657.5,591.41 663.5,589.96 669.5,589.48 675.5,588.99 681.5,588.50 687.5,588.02 693.5,586.57 699.5,586.09 705.5,585.60 711.5,585.12 717.5,584.64 723.5,583.19 729.5,582.71 735.5,582.23 741.5,581.74 747.5,579.35 753.5,578.86 759.5,578.38 765.5,577.90 771.5,576.45 777.5,575.97 783.5,575.48 789.5,574.99 795.5,574.51 801.5,573.06 807.5,572.57 813.5,572.07 819.5,571.58 825.5,569.64 831.5,569.14 837.5,568.64 843.5,568.13 849.5,567.62 855.5,566.15 861.5,565.63 867.5,565.11 873.5,564.59 879.5,564.07 885.5,562.58 891.5,562.05 897.5,561.52 903.5,560.99 909.5,560.45 915.5,558.96 921.5,558.43 927.5,557.89 933.5,557.36 939.5,556.83 945.5,555.35 951.5,554.83 957.5,554.31 963.5,553.80 969.5,553.29 975.5,551.84 981.5,551.34 987.5,550.86 993.5,549.90 999.5,548.47 1005.5,548.01 1011.5,547.55 1017.5,547.10 1023.5,546.65 1029.5,545.26 1035.5,544.82 1041.5,544.39 1047.5,543.96 1053.5,543.54 1059.5,542.15 1065.5,541.73 1071.5,541.31 1077.5,540.89 1083.5,540.46 1089.5,539.08 1095.5,538.65 1101.5,538.22 1107.5,537.79 1113.5,537.36 1119.5,535.96 1125.5,535.52 1131.5,535.08 1137.5,534.63 1143.5,534.18 1149.5,532.77 1155.5,532.31 1161.5,531.85 1167.5,531.39 1173.5,530.92 1179.5,529.50 1185.5,529.03 1191.5,528.56 1197.5,528.09 1203.5,527.62 1209.5,526.19 1215.5,525.72 1221.5,525.24 1227.5,524.77" stroke-width="1.75"/>
<polyline points="33.5,723.18 39.5,721.76 45.5,721.30 51.5,720.84 57.5,720.38 63.5,719.92 69.5,718.51 75.5,718.05 81.5,717.60 87.5,717.14 93.5,716.69 99.5,715.29 105.5,714.84 111.5,714.39 117.5,713.94 123.5,713.50 129.5,712.10 135.5,711.18 141.5,710.73 147.5,710.29 153.5,708.90 159.5,708.46 165.5,708.02 171.5,707.58 177.5,707.14 183.5,705.75 189.5,705.31 195.5,704.87 201.5,704.43 207.5,704.00 213.5,702.60 219.5,702.16 225.5,701.72 231.5,701.28 237.5,700.84 243.5,699.44 249.5,698.99 255.5,698.55 261.5,698.10 267.5,697.65 273.5,696.24 279.5,695.78 285.5,695.33 291.5,694.87 297.5,694.41 303.5,692.99 309.5,692.52 315.5,689.66 321.5,689.18 327.5,688.71 333.5,686.31 339.5,685.83 345.5,685.35 351.5,684.86 357.5,684.37 363.5,682.92 369.5,682.43 375.5,681.93 381.5,681.43 387.5,680.93 393.5,679.46 399.5,678.96 405.5,678.45 411.5,677.94 417.5,677.42 423.5,675.95 429.5,675.44 435.5,674.92 441.5,674.40 447.5,673.89 453.5,672.41 459.5,671.89 465.5,671.37 471.5,670.85 477.5,670.33 483.5,668.86 489.5,668.34 495.5,667.82 501.5,667.30 507.5,666.78 513.5,665.31 519.5,664.79 525.5,664.28 531.5,663.76 537.5,663.25 543.5,661.78 549.5,661.27 555.5,660.76 561.5,660.25 567.5,659.74 573.5,658.28 579.5,657.78 585.5,657.27 591.5,656.77 597.5,656.27 603.5,654.81 609.5,654.31 615.5,653.82 621.5,653.32 627.5,652.83 633.5,651.38 639.5,650.88 645.5,650.39 651.5,649.90 657.5,649.41 663.5,647.96 669.5,647.48 675.5,646.99 681.5,646.50 687.5,646.02 693.5,644.57 699.5,644.09 705.5,643.60 711.5,643.12 717.5,642.64 723.5,641.19 729.5,640.71 735.5,640.23 741.5,639.74 747.5,637.35 753.5,636.86 759.5,636.38 765.5,635.90 771.5,634.45 777.5,633.97 783.5,633.48 789.5,632.99 795.5,632.51 801.5,631.06 807.5,630.57 813.5,630.07 819.5,629.58 825.5,627.64 831.5,627.14 837.5,626.64 843.5,626.13 849.5,625.62 855.5,624.15 861.5,623.63 867.5,623.11 873.5,622.59 879.5,622.07 885.5,620.58 891.5,620.05 897.5,619.52 903.5,618.99 909.5,618.45 915.5,616.96 921.5,616.43 927.5,615.89 933.5,615.36 939.5,614.83 945.5,613.35 951.5,612.83 957.5,612.31 963.5,611.80 969.5,611.29 975.5,609.84 981.5,609.34 987.5,608.86 993.5,607.90 999.5,606.47 1005.5,606.01 1011.5,605.55 1017.5,605.10 1023.5,604.65 1029.5,603.26 1035.5,602.82 1041.5,602.39 1047.5,601.96 1053.5,601.54 1059.5,600.15 1065.5,599.73 1071.5,599.31 1077.5,598.89 1083.5,598.46 1089.5,597.08 1095.5,596.65 1101.5,596.22 1107.5,595.79 1113.5,595.36 1119.5,593.96 1125.5,593.52 1131.5,593.08 1137.5,592.63 1143.5,592.18 1149.5,590.77 1155.5,590.31 1161.5,589.85 1167.5,589.39 1173.5,588.92 1179.5,587.50 1185.5,587.03 1191.5,586.56 1197.5,586.09 1203.5,585.62 1209.5,584.19 1215.5,583.72 1221.5,583.24 1227.5,582.77" stroke-width="1"/>
<polyline points="33.5,781.18 39.5,779.76 45.5,779.30 51.5,778.84 57.5,778.38 63.5,777.92 69.5,776.51 75.5,776.05 81.5,775.60 87.5,775.14 93.5,774.69 99.5,773.29 105.5,772.84 111.5,772.39 117.5,771.94 123.5,771.50 129.5,770.10 135.5,769.18 141.5,768.73 147.5,768.29 153.5,766.90 159.5,766.46 165.5,766.02 171.5,765.58 177.5,765.14 183.5,763.75 189.5,763.31 195.5,762.87 201.5,762.43 207.5,762.00 213.5,760.60 219.5,760.16 225.5,759.72 231.5,759.28 237.5,758.84 243.5,757.44 249.5,756.99 255.5,756.55 261.5,756.10 267.5,755.65 273.5,754.24 279.5,753.78 285.5,753.33 291.5,752.87 297.5,752.41 303.5,750.99 309.5,750.52 315.5,747.66 321.5,747.18 327.5,746.71 333.5,744.31 339.5,743.83 345.5,743.35 351.5,742.86 357.5,742.37 363.5,740.92 369.5,740.43 375.5,739.93 381.5,739.43 387.5,738.93 393.5,737.46 399.5,736.96 405.5,736.45 411.5,735.94 417.5,735.42 423.5,733.95 429.5,733.44 435.5,732.92 441.5,732.40 447.5,731.89 453.5,730.41 459.5,729.89 465.5,729.37 471.5,728.85 477.5,728.33 483.5,726.86 489.5,726.34 495.5,725.82 501.5,725.30 507.5,724.78 513.5,723.31 519.5,722.79 525.5,722.28 531.5,721.76 537.5,721.25 543.5,719.78 549.5,719.27 555.5,718.76 561.5,718.25 567.5,717.74 573.5,716.28 579.5,715.78 585.5,715.27 591.5,714.77 597.5,714.27 603.5,712.81 609.5,712.31 615.5,711.82 621.5,711.32 627.5,710.83 633.5,709.38 639.5,708.88 645.5,708.39 651.5,707.90 657.5,707.41 663.5,705.96 669.5,705.48 675.5,704.99 681.5,704.50 687.5,704.02 693.5,702.57 699.5,702.09 705.5,701.60 711.5,701.12 717.5,700.64 723.5,699.19 729.5,698.71 735.5,698.23 741.5,697.74 747.5,695.35 753.5,694.86 759.5,694.38 765.5,693.90 771.5,692.45 777.5,691.97 783.5,691.48 789.5,690.99 795.5,690.51 801.5,689.06 807.5,688.57 813.5,688.07 819.5,687.58 825.5,685.64 831.5,685.14 837.5,684.64 843.5,684.13 849.5,683.62 855.5,682.15 861.5,681.63 867.5,681.11 873.5,680.59 879.5,680.07 885.5,678.58 891.5,678.05 897.5,677.52 903.5,676.99 909.5,676.45 915.5,674.96 921.5,674.43 927.5,673.89 933.5,673.36 939.5,672.83 945.5,671.35 951.5,670.83 957.5,670.31 963.5,669.80 969.5,669.29 975.5,667.84 981.5,667.34 987.5,666.86 993.5,665.90 999.5,664.47 1005.5,664.01 1011.5,663.55 1017.5,663.10 1023.5,662.65 1029.5,661.26 1035.5,660.82 1041.5,660.39 1047.5,659.96 1053.5,659.54 1059.5,658.15 1065.5,657.73 1071.5,657.31 1077.5,656.89 1083.5,656.46 1089.5,655.08 1095.5,654.65 1101.5,654.22 1107.5,653.79 1113.5,653.36 1119.5,651.96 1125.5,651.52 1131.5,651.08 1137.5,650.63 1143.5,650.18 1149.5,648.77 1155.5,648.31 1161.5,647.85 1167.5,647.39 1173.5,646.92 1179.5,645.50 1185.5,645.03 1191.5,644.56 1197.5,644.09 1203.5,643.62 1209.5,642.19 1215.5,641.72 1221.5,641.24 1227.5,640.77" stroke-width="1"/>
<polyline points="33.5,839.18 39.5,837.76 45.5,837.30 51.5,836.84 57.5,836.38 63.5,835.92 69.5,834.51 75.5,834.05 81.5,833.60 87.5,833.14 93.5,832.69 99.5,831.29 105.5,830.84 111.5,830.39 117.5,829.94 123.5,829.50 129.5,828.10 135.5,827.18 141.5,826.73 147.5,826.29 153.5,824.90 159.5,824.46 165.5,824.02 171.5,823.58 177.5,823.14 183.5,821.75 189.5,821.31 195.5,820.87 201.5,820.43 207.5,820.00 213.5,818.60 219.5,818.16 225.5,817.72 231.5,817.28 237.5,816.84 243.5,815.44 249.5,814.99 255.5,814.55 261.5,814.10 267.5,813.65 273.5,812.24 279.5,811.78 285.5,811.33 291.5,810.87 297.5,810.41 303.5,808.99 309.5,808.52 315.5,805.66 321.5,805.18 327.5,804.71 333.5,802.31 339.5,801.83 345.5,801.35 351.5,800.86 357.5,800.37 363.5,798.92 369.5,798.43 375.5,797.93 381.5,797.43 387.5,796.93 393.5,795.46 399.5,794.96 405.5,794.45 411.5,793.94 417.5,793.42 423.5,791.95 429.5,791.44 435.5,790.92 441.5,790.40 447.5,789.89 453.5,788.41 459.5,787.89 465.5,787.37 471.5,786.85 477.5,786.33 483.5,784.86 489.5,784.34 495.5,783.82 501.5,783.30 507.5,782.78 513.5,781.31 519.5,780.79 525.5,780.28 531.5,779.76 537.5,779.25 543.5,777.78 549.5,777.27 555.5,776.76 561.5,776.25 567.5,775.74 573.5,774.28 579.5,773.78 585.5,773.27 591.5,772.77 597.5,772.27 603.5,770.81 609.5,770.31 615.5,769.82 621.5,769.32 627.5,768.83 633.5,767.38 639.5,766.88 645.5,766.39 651.5,765.90 657.5,765.41 663.5,763.96 669.5,763.48 675.5,762.99 681.5,762.50 687.5,762.02 693.5,760.57 699.5,760.09 705.5,759.60 711.5,759.12 717.5,758.64 723.5,757.19 729.5,756.71 735.5,756.23 741.5,755.74 747.5,753.35 753.5,752.86 759.5,752.38 765.5,751.90 771.5,750.45 777.5,749.97 783.5,749.48 789.5,748.99 795.5,748.51 801.5,747.06 807.5,746.57 813.5,746.07 819.5,745.58 825.5,743.64 831.5,743.14 837.5,742.64 843.5,742.13 849.5,741.62 855.5,740.15 861.5,739.63 867.5,739.11 873.5,738.59 879.5,738.07 885.5,736.58 891.5,736.05 897.5,735.52 903.5,734.99 909.5,734.45 915.5,732.96 921.5,732.43 927.5,731.89 933.5,731.36 939.5,730.83 945.5,729.35 951.5,728.83 957.5,728.31 963.5,727.80 969.5,727.29 975.5,725.84 981.5,725.34 987.5,724.86 993.5,723.90 999.5,722.47 1005.5,722.01 1011.5,721.55 1017.5,721.10 1023.5,720.65 1029.5,719.26 1035.5,718.82 1041.5,718.39 1047.5,717.96 1053.5,717.54 1059.5,716.15 1065.5,715.73 1071.5,715.31 1077.5,714.89 1083.5,714.46 1089.5,713.08 1095.5,712.65 1101.5,712.22 1107.5,711.79 1113.5,711.36 1119.5,709.96 1125.5,709.52 1131.5,709.08 1137.5,708.63 1143.5,708.18 1149.5,706.77 1155.5,706.31 1161.5,705.85 1167.5,705.39 1173.5,704.92 1179.5,703.50 1185.5,703.03 1191.5,702.56 1197.5,702.09 1203.5,701.62 1209.5,700.19 1215.5,699.72 1221.5,699.24 1227.5,698.77" stroke-width="1"/>
</g>
<path fill="none" stroke="#fff" stroke-width="1" d="M33.5 105.5H1218.5V729.5H33.5Z"/>
<rect x="33" y="216" width="1" height="179" fill="#ff0"/>
<rect x="1209.5" y="410.5" width="8" height="13" fill="#fff" stroke="#080" stroke-width="1"/>
<circle cx="1213.5" cy="417" r="2.8" fill="#fff" stroke="#000" stroke-width="1.2" shape-rendering="auto"/>
<rect x="1118" y="727" width="4" height="5" fill="#ff0"/>
<g font-family="Liberation Sans, Arial, sans-serif" shape-rendering="auto">
<text x="43.5" y="136" font-size="11" fill="#f00" textLength="149" lengthAdjust="spacingAndGlyphs">[005] Mars Price Line G 90 N -1</text>
<text x="43.5" y="145.6" font-size="11" fill="#f2a455" textLength="162" lengthAdjust="spacingAndGlyphs">[006] Jupiter Price Line G 180 N -1</text>
<text x="34" y="715" font-size="10" fill="#fff" textLength="159" lengthAdjust="spacingAndGlyphs">FIBONACCI/GALACTIC TRADER(TM)</text>
<text x="36" y="743" font-size="11" fill="#fff">2008-10-20</text>
<text x="126" y="743" font-size="11" fill="#fff">2008-11-10</text>
<text x="210" y="743" font-size="11" fill="#fff">2008-12-01</text>
<text x="300" y="743" font-size="11" fill="#fff">2008-12-22</text>
<text x="360" y="743" font-size="11" fill="#fff">2009-01-12</text>
<text x="450" y="743" font-size="11" fill="#fff">2009-02-02</text>
<text x="540" y="743" font-size="11" fill="#fff">2009-02-23</text>
<text x="630" y="743" font-size="11" fill="#fff">2009-03-16</text>
<text x="720" y="743" font-size="11" fill="#fff">2009-04-06</text>
<text x="798" y="743" font-size="11" fill="#fff">2009-04-27</text>
<text x="882" y="743" font-size="11" fill="#fff">2009-05-18</text>
<text x="972" y="743" font-size="11" fill="#fff">2009-06-08</text>
<text x="1056" y="743" font-size="11" fill="#fff">2009-06-29</text>
<text x="1146" y="743" font-size="11" fill="#fff">2009-07-20</text>
<clipPath id="cy"><rect x="1225" y="103" width="26" height="644"/></clipPath><g clip-path="url(#cy)">
<text x="1231" y="152" font-size="11" fill="#fff">2100</text>
<text x="1231" y="217" font-size="11" fill="#fff">2000</text>
<text x="1231" y="281" font-size="11" fill="#fff">1900</text>
<text x="1231" y="345" font-size="11" fill="#fff">1800</text>
<text x="1231" y="410" font-size="11" fill="#fff">1700</text>
<text x="1231" y="474" font-size="11" fill="#fff">1600</text>
<text x="1231" y="539" font-size="11" fill="#fff">1500</text>
<text x="1231" y="603" font-size="11" fill="#fff">1400</text>
<text x="1231" y="668" font-size="11" fill="#fff">1300</text>
<text x="1231" y="731.8" font-size="11" fill="#fff">1200</text>
</g>
<rect x="1220" y="362" width="31" height="14" fill="#fff"/>
<text x="1225" y="373" font-size="11" fill="#000">1759</text>
<rect x="1235" y="733" width="14" height="14" fill="#c0c0c0"/><path d="M1235.5 746.5V733.5H1248.5" stroke="#fff" fill="none"/><path d="M1235.5 746.5H1248.5V733.5" stroke="#606060" fill="none"/>
<text x="1237" y="744" font-size="9.5" fill="#000" textLength="10.5" lengthAdjust="spacingAndGlyphs">TF</text>
</g>
</svg><svg class="abs" style="left:0;top:760px" width="1280" height="40" viewBox="0 760 1280 40" shape-rendering="auto"><defs>
<linearGradient id="tk" x1="0" y1="0" x2="0" y2="1"><stop offset="0" stop-color="#6a7077"/><stop offset=".07" stop-color="#585e65"/><stop offset=".47" stop-color="#33383e"/><stop offset=".5" stop-color="#0b0d10"/><stop offset="1" stop-color="#050608"/></linearGradient>
<linearGradient id="b1" x1="0" y1="0" x2="0" y2="1"><stop offset="0" stop-color="#5a6067"/><stop offset=".46" stop-color="#3a3f46"/><stop offset=".5" stop-color="#0d0f12"/><stop offset="1" stop-color="#16191d"/></linearGradient>
<linearGradient id="b2" x1="0" y1="0" x2="0" y2="1"><stop offset="0" stop-color="#15181c"/><stop offset=".5" stop-color="#08090b"/><stop offset="1" stop-color="#0c0e11"/></linearGradient>
<radialGradient id="orb" cx=".5" cy=".35" r=".75"><stop offset="0" stop-color="#5fa0c8"/><stop offset=".5" stop-color="#245f8e"/><stop offset=".85" stop-color="#123c62"/><stop offset="1" stop-color="#2a9ad0"/></radialGradient>
<radialGradient id="ffx" cx=".4" cy=".4" r=".6"><stop offset="0" stop-color="#3a6fc8"/><stop offset="1" stop-color="#1a3a88"/></radialGradient>
</defs><rect x="0" y="770" width="1280" height="30" fill="url(#tk)"/><circle cx="30" cy="785" r="20" fill="#0a1622" stroke="none" stroke-width="1" /><circle cx="30" cy="785" r="18.6" fill="url(#orb)" stroke="#15405f" stroke-width="1.2" /><path d="M12.500 781a18 18 0 0 1 35 0q-17.500-7-35 0z" fill="#fff" opacity=".22"/><path d="M14 794a18.500 18.500 0 0 0 32 0a22 22 0 0 1-32 0z" fill="#35c0f0" opacity=".8"/><g transform="translate(30 785) scale(1.300) translate(-30 -784.300)"><path d="M21.500 774.500q4-2 8 0l-1.600 8q-4-1.600-8 0z" fill="#e8532c"/><path d="M31 775q4 2.200 9.500 0l-1.600 8q-4.500 2-8.800 0z" fill="#80b93c"/><path d="M19.300 784.500q4-1.600 8.200 0l-1.600 8q-4-2-8.200 0z" fill="#3f92da"/><path d="M29 785q4 2.200 9.200 0l-1.600 8q-4.500 2-8.500 0z" fill="#f6ba22"/></g><rect x="65.500" y="779.500" width="15" height="12" fill="#3b7bd8" stroke="#c8d4e8"/><rect x="66" y="788" width="14" height="3" fill="#222"/><circle cx="68.500" cy="789" r="1.600" fill="#e84"/><rect x="66" y="780" width="14" height="4" fill="#5a96e8"/><rect x="88.500" y="779.500" width="15" height="12" fill="#0a2a8a" stroke="#c8d4e8"/><rect x="90" y="781" width="7" height="4" fill="#e8e8e8"/><rect x="90" y="781" width="7" height="1" fill="#3a8"/><rect x="92" y="784" width="7" height="4" fill="#e8e8e8"/><rect x="92" y="784" width="7" height="1" fill="#3a8"/><rect x="94" y="787" width="7" height="4" fill="#e8e8e8"/><rect x="94" y="787" width="7" height="1" fill="#3a8"/><rect x="113" y="777" width="12" height="5" fill="#f09020"/><rect x="112" y="781" width="15" height="9" rx="1" fill="#dfe8f4" stroke="#b8c4d8" stroke-width=".6"/><rect x="115" y="786" width="8" height="6" fill="#4aa86a"/><rect x="117" y="789" width="4" height="3" fill="#38c"/><rect x="122" y="782" width="3" height="2" fill="#d43"/><text x="135.5" y="792.5" font-size="23" fill="#38a2f2" font-weight="bold" font-family="Liberation Sans, sans-serif" textLength="14" lengthAdjust="spacingAndGlyphs">e</text><path d="M137 791q-3-1 0-6q4-6 10-7.500q4-.5 3 2.500" fill="none" stroke="#f0b428" stroke-width="1.700"/><circle cx="165.5" cy="785.5" r="7.5" fill="#e8701a" stroke="none" stroke-width="1" /><circle cx="164.2" cy="783.8" r="5.6" fill="url(#ffx)" stroke="none" stroke-width="1" /><path d="M166 779.5q3.500-.5 5 2.500q-3-1-4.500.5q-2.500.5-3.500 2.500q-1.500-1-.5-3q1.500-2.500 3.500-2.500z" fill="#f29a20"/><path d="M158 786q1 5 6 6.500q5 .5 8-4q-3 2.500-6.500 1.500q-4-1-7.500-4z" fill="#d8520e"/><path d="M158.5 781q-2 3-.5 7q.5-3 2-4.500z" fill="#f6b030"/><rect x="181" y="778" width="14" height="14" fill="#5cbcae" stroke="#2a86f0" stroke-width="1.600"/><circle cx="188" cy="785" r="5.8" fill="#f08a18" stroke="none" stroke-width="1" /><path d="M186 781.500l5.500 3.500-5.500 3.500z" fill="#fff"/><path d="M206 778h13l-1 14h-13z" fill="#d0e4f4" stroke="#88a0b8" stroke-width=".7"/><rect x="207" y="780" width="10" height=".8" fill="#6a9ac8"/><rect x="207" y="782" width="10" height=".8" fill="#6a9ac8"/><rect x="207" y="784" width="10" height=".8" fill="#6a9ac8"/><rect x="207" y="786" width="10" height=".8" fill="#6a9ac8"/><rect x="207" y="788" width="10" height=".8" fill="#6a9ac8"/><rect x="207" y="790" width="10" height=".8" fill="#6a9ac8"/><rect x="206" y="777" width="13" height="1.500" fill="#557"/><rect x="231" y="777" width="9" height="11" rx="3" fill="#f4f4e8"/><rect x="233" y="779" width="5" height="7" fill="#222"/><rect x="234" y="780" width="3" height="3" fill="#ec2"/><path d="M229 791h8l4-3" stroke="#aaa" fill="none"/><path d="M230 792h6" stroke="#36c"/><path d="M251 778l6-1.500v16l-6-1z" fill="#e8c860"/><path d="M257 776.500l6 2v13l-6 1z" fill="#f4dc88"/><rect x="259" y="784" width="2" height="3" fill="#8ad"/><path d="M273 778h14l-2 14h-10z" fill="#a8c4dc" opacity=".85" stroke="#d8e4f0" stroke-width=".7"/><circle cx="280" cy="785.5" r="3" fill="#5a96d8" stroke="none" stroke-width="1" /><g transform="rotate(20 304 785)"><rect x="297.500" y="778.500" width="13" height="13" fill="#222"/><circle cx="304" cy="785" r="5" fill="#e33" stroke="none" stroke-width="1" /><path d="M304 785l5 0a5 5 0 0 1-2.500 4.300z" fill="#3c3"/><path d="M304 785l-2.500 4.300a5 5 0 0 1-2.500-4.300z" fill="#33e"/><path d="M304 785l-5 0a5 5 0 0 1 2.500-4.300z" fill="#ee3"/><path d="M304 785l2.500 4.300a5 5 0 0 1-5 0z" fill="#3cc"/><path d="M304 785l2.500-4.300a5 5 0 0 1 2.500 4.300z" fill="#e3e"/></g><circle cx="326" cy="785" r="7.8" fill="#e8e8e8" stroke="none" stroke-width="1" /><circle cx="326" cy="785" r="6.3" fill="#d82020" stroke="none" stroke-width="1" /><path d="M322 788q1-5 4-7q0 3 2 3q1-1 1-3q2 3 1 7z" fill="#fff"/><path d="M348 776.500l1.500 3h1.500l.5 1.500 5.500-1.500-4 4.500-3 1-2.500 7-1.500.5.5-7-5.500-3.500-1-2 6 .5 1-1.500z" fill="#1010f0"/><rect x="366" y="782" width="14" height="9" rx="2" fill="#0a0a0a"/><text x="364.5" y="785.5" font-size="11" fill="#e01010" font-weight="bold" font-family="Liberation Serif, sans-serif" textLength="17" lengthAdjust="spacingAndGlyphs">MS</text><rect x="368" y="788" width="1" height="1" fill="#8ff"/><rect x="371" y="790" width="1" height="1" fill="#8ff"/><rect x="374" y="787" width="1" height="1" fill="#8ff"/><rect x="377" y="789" width="1" height="1" fill="#8ff"/><rect x="379" y="786" width="1" height="1" fill="#8ff"/><circle cx="396" cy="785" r="7.5" fill="#e33" stroke="none" stroke-width="1" /><path d="M396 785l-6.500-3.750a7.500 7.500 0 0 0 2.750 10.250z" fill="#3a3"/><path d="M396 785l-3.750 6.500a7.500 7.500 0 0 0 10.250-2.750a7.500 7.500 0 0 0 .9-3.750z" fill="#ec3"/><circle cx="396" cy="785" r="3.4" fill="#fff" stroke="none" stroke-width="1" /><circle cx="396" cy="785" r="2.6" fill="#48e" stroke="none" stroke-width="1" /><rect x="433.5" y="772.500" width="155" height="25" rx="3" fill="url(#b1)" stroke="#7d838a"/><circle cx="449.5" cy="785.5" r="7.5" fill="#e8701a" stroke="none" stroke-width="1" /><circle cx="448.2" cy="783.8" r="5.6" fill="url(#ffx)" stroke="none" stroke-width="1" /><path d="M450 779.5q3.500-.5 5 2.500q-3-1-4.500.5q-2.500.5-3.500 2.500q-1.500-1-.5-3q1.500-2.500 3.500-2.500z" fill="#f29a20"/><path d="M442 786q1 5 6 6.500q5 .5 8-4q-3 2.500-6.500 1.500q-4-1-7.500-4z" fill="#d8520e"/><path d="M442.5 781q-2 3-.5 7q.5-3 2-4.500z" fill="#f6b030"/><text x="461" y="789.5" font-size="12.5" fill="#fff" font-weight="normal" font-family="Liberation Sans, sans-serif" textLength="116" lengthAdjust="spacingAndGlyphs">Moje notowania - St...</text><rect x="593.5" y="772.500" width="156" height="25" rx="3" fill="url(#b2)" stroke="#60666d"/><g shape-rendering="crispEdges"><rect x="602" y="777" width="9" height="9" fill="#fff"/><rect x="602" y="779" width="3" height="1" fill="#00f"/><rect x="604" y="780" width="1" height="1" fill="#00f"/><rect x="602" y="781" width="3" height="1" fill="#00f"/><rect x="602" y="782" width="1" height="1" fill="#00f"/><rect x="602" y="783" width="3" height="1" fill="#00f"/><rect x="607" y="778" width="1" height="6" fill="#00f"/><rect x="606" y="780" width="4" height="1" fill="#00f"/><rect x="608" y="778" width="2" height="1" fill="#00f"/><rect x="606" y="783" width="4" height="1" fill="#00f"/><text x="608.5" y="792" font-size="14" fill="#000" font-weight="bold" font-family="Liberation Sans, sans-serif" textLength="8" lengthAdjust="spacingAndGlyphs">4</text><rect x="614" y="778" width="2" height="2" fill="#0ff"/><rect x="603" y="789" width="2" height="2" fill="#f0f"/><rect x="609" y="791" width="1" height="1" fill="#0c0"/><rect x="615" y="790" width="1" height="1" fill="#fff"/></g><text x="622" y="789.5" font-size="12.5" fill="#fff" font-weight="normal" font-family="Liberation Sans, sans-serif" textLength="110" lengthAdjust="spacingAndGlyphs">Fibonacci/Galactic ...</text><rect x="753.5" y="772.500" width="155" height="25" rx="3" fill="url(#b1)" stroke="#7d838a"/><rect x="761" y="777" width="16" height="16" fill="#000"/><ellipse cx="769" cy="785" rx="6" ry="5" fill="#b8cce8"/><ellipse cx="768" cy="784" rx="3.500" ry="2.500" fill="#e8f0fc"/><path d="M762 790l5-5 3 2 6-7" stroke="#1030f0" stroke-width="1.300" fill="none"/><text x="784" y="789.5" font-size="12.5" fill="#fff" font-weight="normal" font-family="Liberation Sans, sans-serif" textLength="67" lengthAdjust="spacingAndGlyphs">Notowania 2</text><text x="1091.5" y="787" font-size="12.5" fill="#e8e8e8" font-weight="normal" font-family="Liberation Sans, sans-serif" textLength="12.500" lengthAdjust="spacingAndGlyphs">PL</text><rect x="1112.500" y="781.500" width="14" height="7" rx="1" fill="#888" stroke="#d0d0d0"/><path d="M1117 781q1-3 4-2.500t4-2" fill="none" stroke="#c8c8c8"/><rect x="1114" y="783" width="1" height="1" fill="#eee"/><rect x="1114" y="785" width="1" height="1" fill="#eee"/><rect x="1116" y="783" width="1" height="1" fill="#eee"/><rect x="1116" y="785" width="1" height="1" fill="#eee"/><rect x="1118" y="783" width="1" height="1" fill="#eee"/><rect x="1118" y="785" width="1" height="1" fill="#eee"/><rect x="1120" y="783" width="1" height="1" fill="#eee"/><rect x="1120" y="785" width="1" height="1" fill="#eee"/><rect x="1122" y="783" width="1" height="1" fill="#eee"/><rect x="1122" y="785" width="1" height="1" fill="#eee"/><rect x="1124" y="783" width="1" height="1" fill="#eee"/><rect x="1124" y="785" width="1" height="1" fill="#eee"/><path d="M1146 781l-5 4 5 4" fill="none" stroke="#fff" stroke-width="1.800"/><rect x="1153" y="775" width="16" height="16" fill="#000"/><ellipse cx="1161" cy="783" rx="6" ry="5" fill="#b8cce8"/><ellipse cx="1160" cy="782" rx="3.500" ry="2.500" fill="#e8f0fc"/><path d="M1154 788l5-5 3 2 6-7" stroke="#1030f0" stroke-width="1.300" fill="none"/><rect x="1189.500" y="777.500" width="6" height="12" rx="1" fill="#9ad89a" stroke="#f0f0f0"/><rect x="1191" y="776" width="3" height="1.500" fill="#ddd"/><path d="M1183 781h6v3l-2 2v4h-2v-4l-2-2z" fill="#f4f4f4"/><rect x="1184" y="777.500" width="1.200" height="3.500" fill="#eb4"/><rect x="1187" y="777.500" width="1.200" height="3.500" fill="#eb4"/><rect x="1204.500" y="777.500" width="9" height="7" fill="#3a78d8" stroke="#dde"/><rect x="1200.500" y="781.500" width="9" height="7" fill="#3a78d8" stroke="#dde"/><rect x="1203" y="789" width="5" height="1.500" fill="#ccd"/><circle cx="1210.5" cy="787.5" r="3.6" fill="#2a9a4a" stroke="none" stroke-width="1" /><path d="M1208 786q2-2 4 0q-1 2-3 1.500z" fill="#4ad"/><path d="M1218.500 782.500h3l4.500-4.500v14l-4.500-4.500h-3z" fill="#e0e4e8" stroke="#fff" stroke-width=".6"/><path d="M1228 782q1.600 3 0 6M1230.500 780q2.600 5 0 10" fill="none" stroke="#5c5" stroke-width="1.200"/><text x="1239.5" y="787" font-size="12.5" fill="#fff" font-weight="normal" font-family="Liberation Sans, sans-serif" textLength="27" lengthAdjust="spacingAndGlyphs">03:39</text></svg>

</body></html>
